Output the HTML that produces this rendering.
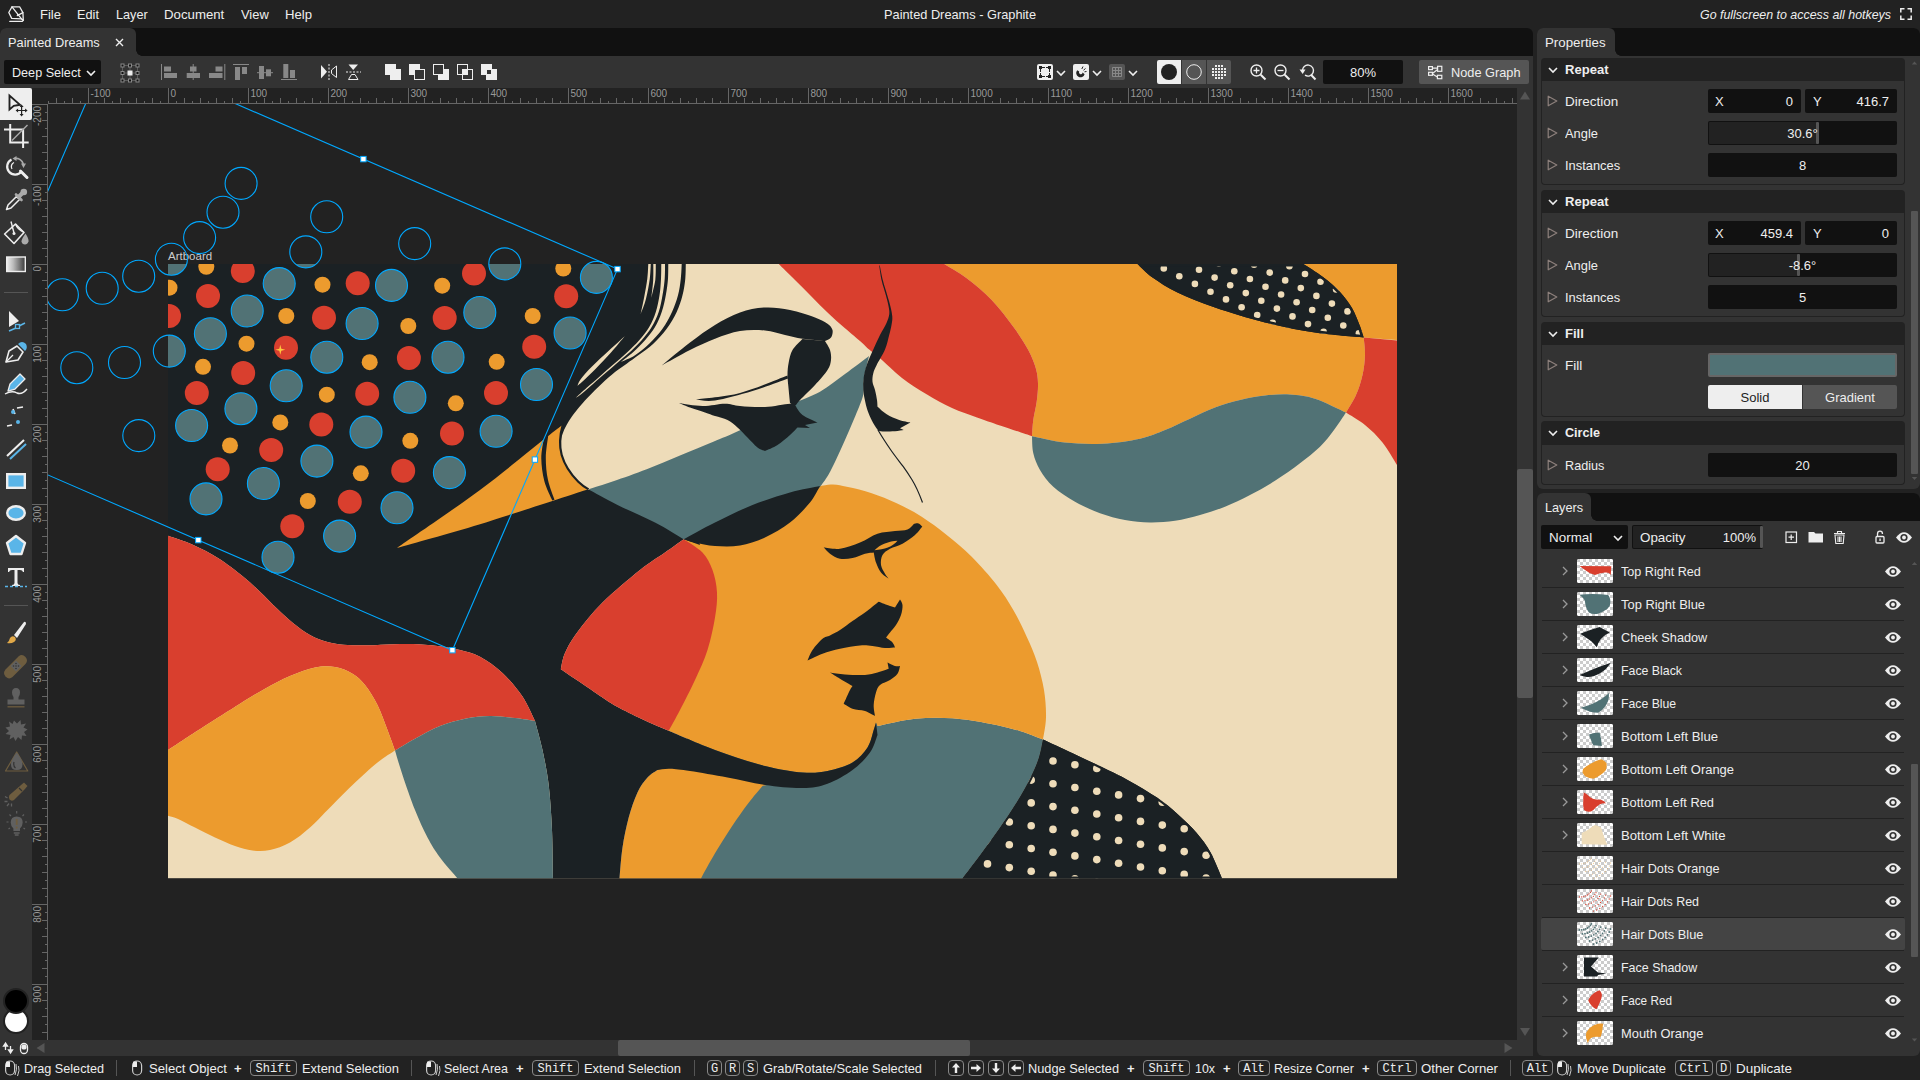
<!DOCTYPE html><html><head><meta charset="utf-8"><title>Painted Dreams - Graphite</title><style>
*{box-sizing:border-box;margin:0;padding:0}
html,body{width:1920px;height:1080px;overflow:hidden;background:#222}
body{font-family:"Liberation Sans",sans-serif;font-size:13.6px;color:#eee;position:relative;line-height:1}
.a{position:absolute}
.t{position:absolute;white-space:nowrap;line-height:16px;height:16px;transform-origin:0 50%;transform:scaleX(.956)}
.tc{transform-origin:50% 50%}
.tr{transform-origin:100% 50%}
.b{font-weight:bold}
.i{font-style:italic}
.k{position:absolute;top:1060px;height:16px;border:1px solid #888;border-radius:4px;font-family:"Liberation Mono",monospace;font-size:12px;line-height:14px;padding-top:1px;text-align:center;color:#eee}
.f{position:absolute;background:#111;border-radius:2px;height:24px}
.sec{position:absolute;left:1541px;width:364px;background:#222;border-radius:4px 4px 0 0;height:24px}
.body{position:absolute;left:1541px;width:364px;border:1px solid #222;border-top:none;border-radius:0 0 4px 4px;background:#333}
.row{position:absolute;left:1542px;width:362px;height:32px;border-bottom:1px solid #222}
.th{position:absolute;left:1577px;width:36px;height:24px;border-radius:2px;overflow:hidden;background:#fff}
svg{display:block;overflow:visible}
</style></head><body><svg width="0" height="0" style="position:absolute"><defs><pattern id="chk" width="6" height="6" patternUnits="userSpaceOnUse"><rect width="6" height="6" fill="#fff"/><rect width="3" height="3" fill="#ccc"/><rect x="3" y="3" width="3" height="3" fill="#ccc"/></pattern></defs></svg><div class="a" style="left:0;top:0;width:1920px;height:28px;background:#222"></div><svg class="a" style="left:0px;top:0px" width="1" height="1" viewBox="0 0 1 1" ><g fill="none" stroke="#eee" stroke-width="1.300" stroke-linejoin="round" stroke-linecap="round"><path d="M12 6.800H19.600L22.900 12.600L23.300 20.300L21.500 18.900L11.700 18.400L8.800 12.500Z"/><path d="M12 6.800L21.500 18.900M22.900 12.600L17.300 15.600M9.800 21.400L22.300 21.300L23.300 20.300"/></g></svg><div class="t " style="left:40px;top:7px;transform:scaleX(0.9586);transform-origin:0 50%;">File</div><div class="t " style="left:77px;top:7px;transform:scaleX(0.9387);transform-origin:0 50%;">Edit</div><div class="t " style="left:116px;top:7px;transform:scaleX(0.9319);transform-origin:0 50%;">Layer</div><div class="t " style="left:164px;top:7px;transform:scaleX(0.9731);transform-origin:0 50%;">Document</div><div class="t " style="left:241px;top:7px;transform:scaleX(0.9480);transform-origin:0 50%;">View</div><div class="t " style="left:285px;top:7px;transform:scaleX(0.9654);transform-origin:0 50%;">Help</div><div class="t " style="left:884px;top:7px;transform:scaleX(0.9401);transform-origin:0 50%;">Painted Dreams - Graphite</div><div class="t i" style="left:1700px;top:7px;transform:scaleX(0.9126);transform-origin:0 50%;">Go fullscreen to access all hotkeys</div><svg class="a" style="left:1900px;top:8px" width="12" height="12" viewBox="0 0 12 12" ><path d="M0.800 4.500V0.800H4.500M7.500 0.800H11.200V4.500M11.200 7.500V11.200H7.500M4.500 11.200H0.800V7.500" fill="none" stroke="#eee" stroke-width="1.500"/></svg><div class="a" style="left:0;top:28px;width:1533px;height:28px;background:#111;border-radius:6px 6px 0 0"></div><div class="a" style="left:0;top:28px;width:136px;height:28px;background:#333;border-radius:6px 6px 0 0"></div><div class="a" style="left:136px;top:50px;width:6px;height:6px;background:radial-gradient(circle at 100% 0,#111 5.5px,#333 6px)"></div><div class="t " style="left:8px;top:35px;transform:scaleX(0.9408);transform-origin:0 50%;">Painted Dreams</div><svg class="a" style="left:115px;top:38px" width="9" height="9" viewBox="0 0 9 9" ><path d="M1 1L8 8M8 1L1 8" stroke="#eee" stroke-width="1.4"/></svg><div class="a" style="left:0;top:56px;width:1533px;height:32px;background:#333"></div><div class="f" style="left:4px;top:60px;width:97px"></div><div class="t " style="left:12px;top:65px;transform:scaleX(0.9276);transform-origin:0 50%;">Deep Select</div><svg class="a" style="left:86px;top:69.5px" width="10" height="6" viewBox="0 0 10 6" ><path d="M1 1L5 5L9 1" fill="none" stroke="#eee" stroke-width="1.6"/></svg><svg class="a" style="left:119.5px;top:62.5px" width="20" height="20" viewBox="0 0 20 20" ><path d="M2.5 2.5H17.5V17.5H2.5ZM10 2.5V17.5M2.5 10H17.5" fill="none" stroke="#888" stroke-width="1" stroke-dasharray="1 1"/><rect x="1.0" y="1.0" width="3" height="3" fill="#111" stroke="#888" stroke-width="1"/><rect x="1.0" y="8.5" width="3" height="3" fill="#111" stroke="#888" stroke-width="1"/><rect x="1.0" y="16.0" width="3" height="3" fill="#111" stroke="#888" stroke-width="1"/><rect x="8.5" y="1.0" width="3" height="3" fill="#111" stroke="#888" stroke-width="1"/><rect x="8.5" y="16.0" width="3" height="3" fill="#111" stroke="#888" stroke-width="1"/><rect x="16.0" y="1.0" width="3" height="3" fill="#111" stroke="#888" stroke-width="1"/><rect x="16.0" y="8.5" width="3" height="3" fill="#111" stroke="#888" stroke-width="1"/><rect x="16.0" y="16.0" width="3" height="3" fill="#111" stroke="#888" stroke-width="1"/><rect x="7.5" y="7.5" width="5" height="5" fill="#eee"/></svg><svg class="a" style="left:0px;top:0px" width="1" height="1" viewBox="0 0 1 1" ><g fill="#888"><rect x="161" y="64" width="1" height="16"/><rect x="164" y="66.5" width="7" height="5"/><rect x="164" y="73" width="13" height="5"/><rect x="192.7" y="64" width="1" height="16"/><rect x="190" y="66.5" width="6.5" height="5"/><rect x="186.7" y="73" width="13.3" height="5"/><rect x="224.3" y="64" width="1" height="16"/><rect x="215.5" y="66.5" width="7" height="5"/><rect x="209" y="73" width="13.5" height="5"/><rect x="233" y="64" width="16" height="1"/><rect x="235" y="67" width="5" height="13"/><rect x="242" y="67" width="5" height="7"/><rect x="257" y="72.2" width="16" height="1"/><rect x="259" y="66" width="5" height="13"/><rect x="266" y="69.3" width="5" height="7"/><rect x="281" y="79" width="16" height="1"/><rect x="283.3" y="64" width="5" height="14"/><rect x="290" y="70" width="5" height="8"/></g></svg><svg class="a" style="left:0px;top:0px" width="1" height="1" viewBox="0 0 1 1" ><path d="M321 65L327 71.7L321 78.5Z" fill="#eee"/><path d="M329 64V80" stroke="#eee" stroke-width="1" stroke-dasharray="2 1.5"/><path d="M336.5 66L331.5 70V73.5L336.5 77.5Z" fill="none" stroke="#eee" stroke-width="1"/></svg><svg class="a" style="left:0px;top:0px" width="1" height="1" viewBox="0 0 1 1" ><path d="M348.5 64.5H358L353.2 70Z" fill="#eee"/><path d="M346 72H361" stroke="#eee" stroke-width="1" stroke-dasharray="2 1.5"/><path d="M351.5 74.5H355L358 79.5H348.5Z" fill="none" stroke="#eee" stroke-width="1"/></svg><svg class="a" style="left:0px;top:0px" width="1" height="1" viewBox="0 0 1 1" ><rect x="385" y="64" width="11" height="11" fill="#eee"/><rect x="390" y="69" width="11" height="11" fill="#eee"/><rect x="409" y="64" width="11" height="11" fill="#eee"/><rect x="414.5" y="69.5" width="10" height="10" fill="#333" stroke="#eee"/><rect x="438" y="69" width="11" height="11" fill="#eee"/><rect x="433.5" y="64.5" width="10" height="10" fill="#333" stroke="#eee"/><rect x="457.5" y="64.5" width="10" height="10" fill="none" stroke="#eee"/><rect x="462.5" y="69.5" width="10" height="10" fill="none" stroke="#eee"/><rect x="462" y="69" width="6" height="6" fill="#eee"/><rect x="481" y="64" width="11" height="11" fill="#eee"/><rect x="486" y="69" width="11" height="11" fill="#eee"/><rect x="487" y="70" width="4" height="4" fill="#333"/></svg><div class="a" style="left:1037px;top:64px;width:16px;height:16px;background:#eee;border-radius:2px"></div><svg class="a" style="left:1037px;top:64px" width="16" height="16" viewBox="0 0 16 16" ><path d="M5 3.5H11M5 12.5H11M3.5 5V11M12.5 5V11" stroke="#222" stroke-width="1" stroke-dasharray="3 1" fill="none"/><g fill="#222"><rect x="2" y="2" width="3" height="3"/><rect x="11" y="2" width="3" height="3"/><rect x="2" y="11" width="3" height="3"/><rect x="11" y="11" width="3" height="3"/></g></svg><svg class="a" style="left:1056px;top:69.5px" width="10" height="6" viewBox="0 0 10 6" ><path d="M1 1L5 5L9 1" fill="none" stroke="#eee" stroke-width="1.6"/></svg><div class="a" style="left:1073px;top:64px;width:16px;height:16px;background:#eee;border-radius:2px"></div><svg class="a" style="left:1073px;top:64px" width="16" height="16" viewBox="0 0 16 16" ><path d="M4.2 6.2A4.3 4.3 0 1 0 11.6 10.2L9.6 8.6A1.8 1.8 0 1 1 6.2 7.6Z" fill="#222"/><path d="M10 2.5L8.8 5M12.5 4.5L10.5 6.2M13.5 7.5L11.5 7.8" stroke="#222" stroke-width="1"/></svg><svg class="a" style="left:1092px;top:69.5px" width="10" height="6" viewBox="0 0 10 6" ><path d="M1 1L5 5L9 1" fill="none" stroke="#eee" stroke-width="1.6"/></svg><div class="a" style="left:1109px;top:64px;width:16px;height:16px;background:#555;border-radius:2px"></div><svg class="a" style="left:1109px;top:64px" width="16" height="16" viewBox="0 0 16 16" ><path d="M3.5 3.5H12.5V12.5H3.5ZM6.5 3.5V12.5M9.5 3.5V12.5M3.5 6.5H12.5M3.5 9.5H12.5" stroke="#888" stroke-width="1" fill="none"/></svg><svg class="a" style="left:1128px;top:69.5px" width="10" height="6" viewBox="0 0 10 6" ><path d="M1 1L5 5L9 1" fill="none" stroke="#eee" stroke-width="1.6"/></svg><div class="a" style="left:1157px;top:60px;width:24px;height:24px;background:#eee;border-radius:2px 0 0 2px"></div><div class="a" style="left:1182px;top:60px;width:24px;height:24px;background:#555"></div><div class="a" style="left:1207px;top:60px;width:24px;height:24px;background:#555;border-radius:0 2px 2px 0"></div><svg class="a" style="left:0px;top:0px" width="1" height="1" viewBox="0 0 1 1" ><circle cx="1169" cy="72" r="8" fill="#222"/><circle cx="1194" cy="72" r="7.3" fill="none" stroke="#eee" stroke-width="1"/><g fill="#eee"><rect x="1212" y="68" width="2" height="2"/><rect x="1212" y="71" width="2" height="2"/><rect x="1212" y="74" width="2" height="2"/><rect x="1215" y="65" width="2" height="2"/><rect x="1215" y="68" width="2" height="2"/><rect x="1215" y="71" width="2" height="2"/><rect x="1215" y="74" width="2" height="2"/><rect x="1215" y="77" width="2" height="2"/><rect x="1218" y="65" width="2" height="2"/><rect x="1218" y="68" width="2" height="2"/><rect x="1218" y="71" width="2" height="2"/><rect x="1218" y="74" width="2" height="2"/><rect x="1218" y="77" width="2" height="2"/><rect x="1221" y="65" width="2" height="2"/><rect x="1221" y="68" width="2" height="2"/><rect x="1221" y="71" width="2" height="2"/><rect x="1221" y="74" width="2" height="2"/><rect x="1221" y="77" width="2" height="2"/><rect x="1224" y="68" width="2" height="2"/><rect x="1224" y="71" width="2" height="2"/><rect x="1224" y="74" width="2" height="2"/></g></svg><svg class="a" style="left:0px;top:0px" width="1" height="1" viewBox="0 0 1 1" ><circle cx="1256.5" cy="70.5" r="5.5" fill="none" stroke="#eee" stroke-width="1.4"/><path d="M1260.7 74.7L1265.5 79.5" stroke="#eee" stroke-width="2"/><path d="M1253.5 70.5H1259.5M1256.5 67.5V73.5" stroke="#eee" stroke-width="1.3"/><circle cx="1280.5" cy="70.5" r="5.5" fill="none" stroke="#eee" stroke-width="1.4"/><path d="M1284.7 74.7L1289.5 79.5" stroke="#eee" stroke-width="2"/><path d="M1277.5 70.5H1283.5" stroke="#eee" stroke-width="1.3"/><path d="M1302.5 71A5.5 5.5 0 1 1 1305 75.2" fill="none" stroke="#eee" stroke-width="1.4"/><path d="M1311 74.7L1315.5 79.5" stroke="#eee" stroke-width="2"/><path d="M1299.5 69.5L1302.7 74L1305.5 69.5Z" fill="#eee"/></svg><div class="f" style="left:1323px;top:60px;width:80px"></div><div class="t tc" style="left:1323px;width:80px;text-align:center;top:65px">80%</div><div class="a" style="left:1419px;top:60px;width:110px;height:24px;background:#555;border-radius:2px"></div><svg class="a" style="left:0px;top:0px" width="1" height="1" viewBox="0 0 1 1" ><g fill="none" stroke="#eee" stroke-width="1.200"><rect x="1428.600" y="66.600" width="3.800" height="3"/><rect x="1428.600" y="72.300" width="3.800" height="3"/><rect x="1437.600" y="66.300" width="4.200" height="5"/><rect x="1437.400" y="75.300" width="4.400" height="3.400"/><path d="M1432.400 68.100H1437.600M1432.400 73.500L1437.600 69.500M1432.400 74L1437.400 77"/></g></svg><div class="t " style="left:1451px;top:65px;transform:scaleX(0.9384);transform-origin:0 50%;">Node Graph</div><div class="a" style="left:32px;top:88px;width:1485px;height:16px;background:#222"></div><div class="a" style="left:32px;top:104px;width:16px;height:936px;background:#222"></div><svg class="a" style="left:0px;top:0px" width="1" height="1" viewBox="0 0 1 1" ><path d="M48.5 101V103M56.5 98V103M64.5 101V103M72.5 98V103M80.5 101V103M88.5 88V103M96.5 101V103M104.5 98V103M112.5 101V103M120.5 98V103M128.5 101V103M136.5 98V103M144.5 101V103M152.5 98V103M160.5 101V103M168.5 88V103M176.5 101V103M184.5 98V103M192.5 101V103M200.5 98V103M208.5 101V103M216.5 98V103M224.5 101V103M232.5 98V103M240.5 101V103M248.5 88V103M256.5 101V103M264.5 98V103M272.5 101V103M280.5 98V103M288.5 101V103M296.5 98V103M304.5 101V103M312.5 98V103M320.5 101V103M328.5 88V103M336.5 101V103M344.5 98V103M352.5 101V103M360.5 98V103M368.5 101V103M376.5 98V103M384.5 101V103M392.5 98V103M400.5 101V103M408.5 88V103M416.5 101V103M424.5 98V103M432.5 101V103M440.5 98V103M448.5 101V103M456.5 98V103M464.5 101V103M472.5 98V103M480.5 101V103M488.5 88V103M496.5 101V103M504.5 98V103M512.5 101V103M520.5 98V103M528.5 101V103M536.5 98V103M544.5 101V103M552.5 98V103M560.5 101V103M568.5 88V103M576.5 101V103M584.5 98V103M592.5 101V103M600.5 98V103M608.5 101V103M616.5 98V103M624.5 101V103M632.5 98V103M640.5 101V103M648.5 88V103M656.5 101V103M664.5 98V103M672.5 101V103M680.5 98V103M688.5 101V103M696.5 98V103M704.5 101V103M712.5 98V103M720.5 101V103M728.5 88V103M736.5 101V103M744.5 98V103M752.5 101V103M760.5 98V103M768.5 101V103M776.5 98V103M784.5 101V103M792.5 98V103M800.5 101V103M808.5 88V103M816.5 101V103M824.5 98V103M832.5 101V103M840.5 98V103M848.5 101V103M856.5 98V103M864.5 101V103M872.5 98V103M880.5 101V103M888.5 88V103M896.5 101V103M904.5 98V103M912.5 101V103M920.5 98V103M928.5 101V103M936.5 98V103M944.5 101V103M952.5 98V103M960.5 101V103M968.5 88V103M976.5 101V103M984.5 98V103M992.5 101V103M1000.5 98V103M1008.5 101V103M1016.5 98V103M1024.5 101V103M1032.5 98V103M1040.5 101V103M1048.5 88V103M1056.5 101V103M1064.5 98V103M1072.5 101V103M1080.5 98V103M1088.5 101V103M1096.5 98V103M1104.5 101V103M1112.5 98V103M1120.5 101V103M1128.5 88V103M1136.5 101V103M1144.5 98V103M1152.5 101V103M1160.5 98V103M1168.5 101V103M1176.5 98V103M1184.5 101V103M1192.5 98V103M1200.5 101V103M1208.5 88V103M1216.5 101V103M1224.5 98V103M1232.5 101V103M1240.5 98V103M1248.5 101V103M1256.5 98V103M1264.5 101V103M1272.5 98V103M1280.5 101V103M1288.5 88V103M1296.5 101V103M1304.5 98V103M1312.5 101V103M1320.5 98V103M1328.5 101V103M1336.5 98V103M1344.5 101V103M1352.5 98V103M1360.5 101V103M1368.5 88V103M1376.5 101V103M1384.5 98V103M1392.5 101V103M1400.5 98V103M1408.5 101V103M1416.5 98V103M1424.5 101V103M1432.5 98V103M1440.5 101V103M1448.5 88V103M1456.5 101V103M1464.5 98V103M1472.5 101V103M1480.5 98V103M1488.5 101V103M1496.5 98V103M1504.5 101V103M1512.5 98V103M32 104.5H47M45 112.5H47M42 120.5H47M45 128.5H47M42 136.5H47M45 144.5H47M42 152.5H47M45 160.5H47M42 168.5H47M45 176.5H47M32 184.5H47M45 192.5H47M42 200.5H47M45 208.5H47M42 216.5H47M45 224.5H47M42 232.5H47M45 240.5H47M42 248.5H47M45 256.5H47M32 264.5H47M45 272.5H47M42 280.5H47M45 288.5H47M42 296.5H47M45 304.5H47M42 312.5H47M45 320.5H47M42 328.5H47M45 336.5H47M32 344.5H47M45 352.5H47M42 360.5H47M45 368.5H47M42 376.5H47M45 384.5H47M42 392.5H47M45 400.5H47M42 408.5H47M45 416.5H47M32 424.5H47M45 432.5H47M42 440.5H47M45 448.5H47M42 456.5H47M45 464.5H47M42 472.5H47M45 480.5H47M42 488.5H47M45 496.5H47M32 504.5H47M45 512.5H47M42 520.5H47M45 528.5H47M42 536.5H47M45 544.5H47M42 552.5H47M45 560.5H47M42 568.5H47M45 576.5H47M32 584.5H47M45 592.5H47M42 600.5H47M45 608.5H47M42 616.5H47M45 624.5H47M42 632.5H47M45 640.5H47M42 648.5H47M45 656.5H47M32 664.5H47M45 672.5H47M42 680.5H47M45 688.5H47M42 696.5H47M45 704.5H47M42 712.5H47M45 720.5H47M42 728.5H47M45 736.5H47M32 744.5H47M45 752.5H47M42 760.5H47M45 768.5H47M42 776.5H47M45 784.5H47M42 792.5H47M45 800.5H47M42 808.5H47M45 816.5H47M32 824.5H47M45 832.5H47M42 840.5H47M45 848.5H47M42 856.5H47M45 864.5H47M42 872.5H47M45 880.5H47M42 888.5H47M45 896.5H47M32 904.5H47M45 912.5H47M42 920.5H47M45 928.5H47M42 936.5H47M45 944.5H47M42 952.5H47M45 960.5H47M42 968.5H47M45 976.5H47M32 984.5H47M45 992.5H47M42 1000.5H47M45 1008.5H47M42 1016.5H47M45 1024.5H47M42 1032.5H47M48 103.5H1517M47.5 104V1040" stroke="#666" stroke-width="1" fill="none"/><g fill="#999" font-size="10" style="font-family:'Liberation Sans',sans-serif"><text x="90.5" y="97">-100</text><text x="170.5" y="97">0</text><text x="250.5" y="97">100</text><text x="330.5" y="97">200</text><text x="410.5" y="97">300</text><text x="490.5" y="97">400</text><text x="570.5" y="97">500</text><text x="650.5" y="97">600</text><text x="730.5" y="97">700</text><text x="810.5" y="97">800</text><text x="890.5" y="97">900</text><text x="970.5" y="97">1000</text><text x="1050.5" y="97">1100</text><text x="1130.5" y="97">1200</text><text x="1210.5" y="97">1300</text><text x="1290.5" y="97">1400</text><text x="1370.5" y="97">1500</text><text x="1450.5" y="97">1600</text><text transform="translate(41 106) rotate(-90)" text-anchor="end">-200</text><text transform="translate(41 186) rotate(-90)" text-anchor="end">-100</text><text transform="translate(41 266) rotate(-90)" text-anchor="end">0</text><text transform="translate(41 346) rotate(-90)" text-anchor="end">100</text><text transform="translate(41 426) rotate(-90)" text-anchor="end">200</text><text transform="translate(41 506) rotate(-90)" text-anchor="end">300</text><text transform="translate(41 586) rotate(-90)" text-anchor="end">400</text><text transform="translate(41 666) rotate(-90)" text-anchor="end">500</text><text transform="translate(41 746) rotate(-90)" text-anchor="end">600</text><text transform="translate(41 826) rotate(-90)" text-anchor="end">700</text><text transform="translate(41 906) rotate(-90)" text-anchor="end">800</text><text transform="translate(41 986) rotate(-90)" text-anchor="end">900</text></g></svg><svg id="cv" width="1469" height="936" viewBox="48 104 1469 936" style="position:absolute;left:48px;top:104px;overflow:hidden">
<rect x="48" y="104" width="1469" height="936" fill="#222"/>
<text x="168" y="260" font-size="11.5" fill="#ccc" style="font-family:'Liberation Sans',sans-serif">Artboard</text>
<clipPath id="ab"><rect x="168" y="264" width="1229" height="614.4"/></clipPath>
<g clip-path="url(#ab)"><rect x="168" y="264" width="1229" height="614.4" fill="#eedcb9"/>
<path d="M944.2 264L1397 264L1397 340L1363.7 337.5C1363.9 340.4 1365.2 348.8 1365 355C1364.8 361.2 1364 368.3 1362.5 375C1361 381.7 1358.8 388.8 1356 395C1353.2 401.2 1347.7 409.6 1346 412.5C1340.8 410.2 1324.3 401.7 1315 398.7C1305.7 395.7 1298.3 395 1290 394.5C1281.7 394 1273.3 394.6 1265 395.5C1256.7 396.4 1248.3 398 1240 400C1231.7 402 1223.3 404.4 1215 407.5C1206.7 410.6 1198.3 414.9 1190 418.7C1181.7 422.4 1173.3 426.7 1165 430C1156.7 433.3 1150.4 436.4 1140 438.7C1129.6 441 1115 443.1 1102.5 443.7C1090 444.3 1076.8 443.8 1065 442.5C1053.2 441.2 1037.5 437.2 1032 436.2C1032.2 433.5 1032.5 425.8 1033.3 420C1034.1 414.2 1035.9 407.8 1036.7 401.7C1037.5 395.6 1038.2 388.9 1038 383.3C1037.8 377.7 1037.4 373.9 1035.8 368.3C1034.2 362.8 1032 356.9 1028.3 350C1024.5 343.1 1019.4 335 1013.3 326.7C1007.2 318.4 999.5 308.1 991.7 300C983.9 291.9 974.6 284.3 966.7 278.3C958.8 272.3 948 266.4 944.2 264Z" fill="#ec9b2e"/>
<path d="M1363.7 337.5L1397 340.5L1397 465C1394.6 461.2 1387.8 449.2 1382.5 442.5C1377.2 435.8 1371.1 430 1365 425C1358.9 420 1349.2 414.6 1346 412.5C1347.7 409.6 1353.2 401.2 1356 395C1358.8 388.8 1361 381.7 1362.5 375C1364 368.3 1364.8 361.2 1365 355C1365.2 348.8 1363.9 340.4 1363.7 337.5Z" fill="#d93f2e"/>
<path d="M1032 436.2C1032.2 439.1 1032 447.7 1033.3 453.3C1034.6 458.9 1036.7 464.4 1040 470C1043.3 475.6 1047.5 481.4 1053.3 486.7C1059.1 492 1067.2 497.3 1075 501.7C1082.8 506.1 1091.7 510.2 1100 513.3C1108.3 516.3 1116.7 518.5 1125 520C1133.3 521.5 1141.7 522.4 1150 522.5C1158.3 522.6 1166.7 522 1175 520.8C1183.3 519.5 1191.7 517.4 1200 515C1208.3 512.6 1216.7 510 1225 506.7C1233.3 503.4 1241.7 499.3 1250 495C1258.3 490.7 1266.7 486.1 1275 480.8C1283.3 475.5 1292.5 469 1300 463.3C1307.5 457.6 1314.3 452.2 1320 446.7C1325.7 441.1 1329.7 435.7 1334 430C1338.3 424.3 1344 415.4 1346 412.5C1340.8 410.2 1324.3 401.7 1315 398.7C1305.7 395.7 1298.3 395 1290 394.5C1281.7 394 1273.3 394.6 1265 395.5C1256.7 396.4 1248.3 398 1240 400C1231.7 402 1223.3 404.4 1215 407.5C1206.7 410.6 1198.3 414.9 1190 418.7C1181.7 422.4 1173.3 426.7 1165 430C1156.7 433.3 1150.4 436.4 1140 438.7C1129.6 441 1115 443.1 1102.5 443.7C1090 444.3 1076.8 443.8 1065 442.5C1053.2 441.2 1037.5 437.2 1032 436.2Z" fill="#517275"/>
<path d="M778.8 264L944.2 264C948 266.4 958.8 272.3 966.7 278.3C974.6 284.3 983.9 291.9 991.7 300C999.5 308.1 1007.2 318.4 1013.3 326.7C1019.4 335 1024.5 343.1 1028.3 350C1032 356.9 1034.2 362.8 1035.8 368.3C1037.4 373.9 1037.8 377.7 1038 383.3C1038.2 388.9 1037.5 395.6 1036.7 401.7C1035.9 407.8 1034.1 414.2 1033.3 420C1032.5 425.8 1032.2 433.5 1032 436.2C1026.7 434.4 1009.2 428.6 1000 425.5C990.8 422.4 985 420.4 977 417.5C969 414.6 960.3 411.8 952 408C943.7 404.2 935.3 399.5 927 394.5C918.7 389.5 909.8 384 902 378C894.2 372 885.5 363 880 358.3C874.5 353.6 872.2 352.2 869.2 349.6C866.2 347 865.7 346.1 861.7 342.5C857.7 338.9 850.6 333.2 845 328.3C839.4 323.4 833.8 318.6 828.3 313.3C822.8 308 817.2 302.2 811.7 296.7C806.2 291.1 800.5 285.4 795 280C789.5 274.6 781.5 266.7 778.8 264Z" fill="#d93f2e"/>
<clipPath id="ctr"><path d="M1137.5 264C1140 266.2 1145.8 272.8 1152.5 277.5C1159.2 282.2 1167.1 287.5 1177.5 292.5C1187.9 297.5 1200.4 302.5 1215 307.5C1229.6 312.5 1248.3 318.3 1265 322.5C1281.7 326.7 1298.5 330 1315 332.5C1331.5 335 1355.6 336.7 1363.7 337.5C1363 335.4 1361.5 329.9 1359.5 325C1357.5 320.1 1355.2 313.5 1352 308C1348.8 302.5 1344.8 297.2 1340 292C1335.2 286.8 1329.1 281.7 1323 277C1316.9 272.3 1306.7 266.2 1303.4 264Z"/></clipPath>
<path d="M1137.5 264C1140 266.2 1145.8 272.8 1152.5 277.5C1159.2 282.2 1167.1 287.5 1177.5 292.5C1187.9 297.5 1200.4 302.5 1215 307.5C1229.6 312.5 1248.3 318.3 1265 322.5C1281.7 326.7 1298.5 330 1315 332.5C1331.5 335 1355.6 336.7 1363.7 337.5C1363 335.4 1361.5 329.9 1359.5 325C1357.5 320.1 1355.2 313.5 1352 308C1348.8 302.5 1344.8 297.2 1340 292C1335.2 286.8 1329.1 281.7 1323 277C1316.9 272.3 1306.7 266.2 1303.4 264Z" fill="#1b2124"/>
<g clip-path="url(#ctr)" fill="#eedcb9"><circle cx="1203.2" cy="255.7" r="3.3"/><circle cx="1238.5" cy="257.1" r="3.3"/><circle cx="1273.8" cy="258.5" r="3.3"/><circle cx="1309.1" cy="259.9" r="3.3"/><circle cx="1344.4" cy="261.3" r="3.3"/><circle cx="1148.2" cy="260.6" r="3.3"/><circle cx="1183.5" cy="262" r="3.3"/><circle cx="1218.8" cy="263.4" r="3.3"/><circle cx="1254.1" cy="264.8" r="3.3"/><circle cx="1289.4" cy="266.2" r="3.3"/><circle cx="1324.7" cy="267.6" r="3.3"/><circle cx="1360" cy="269" r="3.3"/><circle cx="1163.8" cy="268.4" r="3.3"/><circle cx="1199" cy="269.8" r="3.3"/><circle cx="1234.3" cy="271.2" r="3.3"/><circle cx="1269.7" cy="272.6" r="3.3"/><circle cx="1305" cy="274" r="3.3"/><circle cx="1340.2" cy="275.4" r="3.3"/><circle cx="1179.3" cy="276.2" r="3.3"/><circle cx="1214.6" cy="277.6" r="3.3"/><circle cx="1249.9" cy="279" r="3.3"/><circle cx="1285.2" cy="280.4" r="3.3"/><circle cx="1320.5" cy="281.8" r="3.3"/><circle cx="1355.8" cy="283.2" r="3.3"/><circle cx="1194.9" cy="283.9" r="3.3"/><circle cx="1230.2" cy="285.3" r="3.3"/><circle cx="1265.5" cy="286.7" r="3.3"/><circle cx="1300.8" cy="288.1" r="3.3"/><circle cx="1336.1" cy="289.5" r="3.3"/><circle cx="1371.4" cy="290.9" r="3.3"/><circle cx="1210.5" cy="291.7" r="3.3"/><circle cx="1245.8" cy="293.1" r="3.3"/><circle cx="1281.1" cy="294.5" r="3.3"/><circle cx="1316.4" cy="295.9" r="3.3"/><circle cx="1351.7" cy="297.3" r="3.3"/><circle cx="1226" cy="299.4" r="3.3"/><circle cx="1261.3" cy="300.8" r="3.3"/><circle cx="1296.6" cy="302.2" r="3.3"/><circle cx="1331.9" cy="303.6" r="3.3"/><circle cx="1367.2" cy="305" r="3.3"/><circle cx="1241.6" cy="307.2" r="3.3"/><circle cx="1276.9" cy="308.6" r="3.3"/><circle cx="1312.2" cy="310" r="3.3"/><circle cx="1347.5" cy="311.4" r="3.3"/><circle cx="1257.2" cy="315" r="3.3"/><circle cx="1292.5" cy="316.4" r="3.3"/><circle cx="1327.8" cy="317.8" r="3.3"/><circle cx="1363.1" cy="319.2" r="3.3"/><circle cx="1272.7" cy="322.7" r="3.3"/><circle cx="1308" cy="324.1" r="3.3"/><circle cx="1343.3" cy="325.5" r="3.3"/><circle cx="1288.3" cy="330.5" r="3.3"/><circle cx="1323.6" cy="331.9" r="3.3"/><circle cx="1358.9" cy="333.3" r="3.3"/><circle cx="1303.9" cy="338.2" r="3.3"/><circle cx="1339.2" cy="339.6" r="3.3"/><circle cx="1374.5" cy="341" r="3.3"/><path d="M1137.5 264C1140 266.2 1145.8 272.8 1152.5 277.5C1159.2 282.2 1167.1 287.5 1177.5 292.5C1187.9 297.5 1200.4 302.5 1215 307.5C1229.6 312.5 1248.3 318.3 1265 322.5C1281.7 326.7 1298.5 330 1315 332.5C1331.5 335 1355.6 336.7 1363.7 337.5C1363 335.4 1361.5 329.9 1359.5 325C1357.5 320.1 1355.2 313.5 1352 308C1348.8 302.5 1344.8 297.2 1340 292C1335.2 286.8 1329.1 281.7 1323 277C1316.9 272.3 1306.7 266.2 1303.4 264Z" fill="none" stroke="#1b2124" stroke-width="5"/></g>
<path d="M700 878.4C700 848.7 670.4 729.7 700 700C729.6 670.3 847.9 700 877.5 700L877.5 726C883.8 724.8 902.5 720 915 718.7C927.5 717.4 940 717.4 952.5 718.2C965 719 978.8 721.6 990 723.7C1001.2 725.8 1011.2 728.4 1020 731C1028.8 733.6 1039.2 738.1 1043 739.5C1042.3 742.6 1040.9 751.6 1038.8 758C1036.7 764.4 1034.2 770.4 1030.4 777.9C1026.7 785.4 1021.5 794.6 1016.3 803C1011.1 811.4 1005.3 820 999.4 828.5C993.5 837 987.1 845.6 981 853.9C974.9 862.2 965.6 874.3 962.5 878.4L700 878.4Z" fill="#517275"/>
<clipPath id="cbr"><path d="M1043 739.5C1047.9 741.8 1063 748.7 1072.6 753.2C1082.2 757.7 1091.4 762 1100.8 766.6C1110.2 771.2 1119.5 775.5 1128.9 780.7C1138.3 785.9 1148.8 792 1157 797.6C1165.2 803.2 1171.4 808.6 1178 814.5C1184.6 820.4 1191.1 826.5 1196.5 832.8C1201.9 839.1 1206.3 844.9 1210.6 852.5C1214.8 860.1 1220.1 874.1 1222 878.4L962.5 878.4C965.6 874.3 974.9 862.2 981 853.9C987.1 845.6 993.5 837 999.4 828.5C1005.3 820 1011.1 811.4 1016.3 803C1021.5 794.6 1026.7 785.4 1030.4 777.9C1034.2 770.4 1036.7 764.4 1038.8 758C1040.9 751.6 1042.3 742.6 1043 739.5Z"/></clipPath>
<path d="M1043 739.5C1047.9 741.8 1063 748.7 1072.6 753.2C1082.2 757.7 1091.4 762 1100.8 766.6C1110.2 771.2 1119.5 775.5 1128.9 780.7C1138.3 785.9 1148.8 792 1157 797.6C1165.2 803.2 1171.4 808.6 1178 814.5C1184.6 820.4 1191.1 826.5 1196.5 832.8C1201.9 839.1 1206.3 844.9 1210.6 852.5C1214.8 860.1 1220.1 874.1 1222 878.4L962.5 878.4C965.6 874.3 974.9 862.2 981 853.9C987.1 845.6 993.5 837 999.4 828.5C1005.3 820 1011.1 811.4 1016.3 803C1021.5 794.6 1026.7 785.4 1030.4 777.9C1034.2 770.4 1036.7 764.4 1038.8 758C1040.9 751.6 1042.3 742.6 1043 739.5Z" fill="#1b2124"/>
<g clip-path="url(#cbr)" fill="#eedcb9"><circle cx="965.6" cy="746.2" r="3.8"/><circle cx="965.6" cy="769" r="3.8"/><circle cx="965.6" cy="791.8" r="3.8"/><circle cx="965.6" cy="814.6" r="3.8"/><circle cx="965.6" cy="837.4" r="3.8"/><circle cx="965.6" cy="860.2" r="3.8"/><circle cx="965.6" cy="883" r="3.8"/><circle cx="987.5" cy="749.9" r="3.8"/><circle cx="987.5" cy="772.7" r="3.8"/><circle cx="987.5" cy="795.5" r="3.8"/><circle cx="987.5" cy="818.3" r="3.8"/><circle cx="987.5" cy="841.1" r="3.8"/><circle cx="987.5" cy="863.9" r="3.8"/><circle cx="987.5" cy="886.7" r="3.8"/><circle cx="1009.3" cy="730.8" r="3.8"/><circle cx="1009.3" cy="753.6" r="3.8"/><circle cx="1009.3" cy="776.4" r="3.8"/><circle cx="1009.3" cy="799.2" r="3.8"/><circle cx="1009.3" cy="822" r="3.8"/><circle cx="1009.3" cy="844.8" r="3.8"/><circle cx="1009.3" cy="867.6" r="3.8"/><circle cx="1031.2" cy="734.5" r="3.8"/><circle cx="1031.2" cy="757.3" r="3.8"/><circle cx="1031.2" cy="780.1" r="3.8"/><circle cx="1031.2" cy="802.9" r="3.8"/><circle cx="1031.2" cy="825.7" r="3.8"/><circle cx="1031.2" cy="848.5" r="3.8"/><circle cx="1031.2" cy="871.3" r="3.8"/><circle cx="1053" cy="738.2" r="3.8"/><circle cx="1053" cy="761" r="3.8"/><circle cx="1053" cy="783.8" r="3.8"/><circle cx="1053" cy="806.6" r="3.8"/><circle cx="1053" cy="829.4" r="3.8"/><circle cx="1053" cy="852.2" r="3.8"/><circle cx="1053" cy="875" r="3.8"/><circle cx="1074.9" cy="741.9" r="3.8"/><circle cx="1074.9" cy="764.7" r="3.8"/><circle cx="1074.9" cy="787.5" r="3.8"/><circle cx="1074.9" cy="810.3" r="3.8"/><circle cx="1074.9" cy="833.1" r="3.8"/><circle cx="1074.9" cy="855.9" r="3.8"/><circle cx="1074.9" cy="878.7" r="3.8"/><circle cx="1096.8" cy="745.6" r="3.8"/><circle cx="1096.8" cy="768.4" r="3.8"/><circle cx="1096.8" cy="791.2" r="3.8"/><circle cx="1096.8" cy="814" r="3.8"/><circle cx="1096.8" cy="836.8" r="3.8"/><circle cx="1096.8" cy="859.6" r="3.8"/><circle cx="1096.8" cy="882.4" r="3.8"/><circle cx="1118.6" cy="749.3" r="3.8"/><circle cx="1118.6" cy="772.1" r="3.8"/><circle cx="1118.6" cy="794.9" r="3.8"/><circle cx="1118.6" cy="817.7" r="3.8"/><circle cx="1118.6" cy="840.5" r="3.8"/><circle cx="1118.6" cy="863.3" r="3.8"/><circle cx="1118.6" cy="886.1" r="3.8"/><circle cx="1140.5" cy="730.2" r="3.8"/><circle cx="1140.5" cy="753" r="3.8"/><circle cx="1140.5" cy="775.8" r="3.8"/><circle cx="1140.5" cy="798.6" r="3.8"/><circle cx="1140.5" cy="821.4" r="3.8"/><circle cx="1140.5" cy="844.2" r="3.8"/><circle cx="1140.5" cy="867" r="3.8"/><circle cx="1140.5" cy="889.8" r="3.8"/><circle cx="1162.3" cy="733.9" r="3.8"/><circle cx="1162.3" cy="756.7" r="3.8"/><circle cx="1162.3" cy="779.5" r="3.8"/><circle cx="1162.3" cy="802.3" r="3.8"/><circle cx="1162.3" cy="825.1" r="3.8"/><circle cx="1162.3" cy="847.9" r="3.8"/><circle cx="1162.3" cy="870.7" r="3.8"/><circle cx="1184.2" cy="737.6" r="3.8"/><circle cx="1184.2" cy="760.4" r="3.8"/><circle cx="1184.2" cy="783.2" r="3.8"/><circle cx="1184.2" cy="806" r="3.8"/><circle cx="1184.2" cy="828.8" r="3.8"/><circle cx="1184.2" cy="851.6" r="3.8"/><circle cx="1184.2" cy="874.4" r="3.8"/><circle cx="1206.1" cy="741.3" r="3.8"/><circle cx="1206.1" cy="764.1" r="3.8"/><circle cx="1206.1" cy="786.9" r="3.8"/><circle cx="1206.1" cy="809.7" r="3.8"/><circle cx="1206.1" cy="832.5" r="3.8"/><circle cx="1206.1" cy="855.3" r="3.8"/><circle cx="1206.1" cy="878.1" r="3.8"/><circle cx="1227.9" cy="745" r="3.8"/><circle cx="1227.9" cy="767.8" r="3.8"/><circle cx="1227.9" cy="790.6" r="3.8"/><circle cx="1227.9" cy="813.4" r="3.8"/><circle cx="1227.9" cy="836.2" r="3.8"/><circle cx="1227.9" cy="859" r="3.8"/><circle cx="1227.9" cy="881.8" r="3.8"/><path d="M1043 739.5C1047.9 741.8 1063 748.7 1072.6 753.2C1082.2 757.7 1091.4 762 1100.8 766.6C1110.2 771.2 1119.5 775.5 1128.9 780.7C1138.3 785.9 1148.8 792 1157 797.6C1165.2 803.2 1171.4 808.6 1178 814.5C1184.6 820.4 1191.1 826.5 1196.5 832.8C1201.9 839.1 1206.3 844.9 1210.6 852.5C1214.8 860.1 1220.1 874.1 1222 878.4L962.5 878.4C965.6 874.3 974.9 862.2 981 853.9C987.1 845.6 993.5 837 999.4 828.5C1005.3 820 1011.1 811.4 1016.3 803C1021.5 794.6 1026.7 785.4 1030.4 777.9C1034.2 770.4 1036.7 764.4 1038.8 758C1040.9 751.6 1042.3 742.6 1043 739.5Z" fill="none" stroke="#1b2124" stroke-width="4"/></g>
<path d="M683.7 539.2C696.4 533.5 737 513.9 760 505C783 496.1 807.2 488.9 821.7 485.8C836.2 482.8 838.4 485.4 846.7 486.7C855 487.9 863.4 490.5 871.7 493.3C880 496.1 888.4 499.4 896.7 503.3C905 507.2 913.4 511.4 921.7 516.7C930 522 938.4 528.3 946.7 535C955 541.7 963.4 548.4 971.7 556.7C980 565 989.8 576.1 996.7 585C1003.6 593.9 1008.3 601.4 1013.3 610C1018.3 618.6 1022.8 628 1026.7 636.7C1030.7 645.4 1034.1 653.1 1037 662C1039.9 670.9 1042.5 680.8 1044 690C1045.5 699.2 1046.2 709.2 1046 717.5C1045.8 725.8 1043.5 735.8 1043 739.5C1039.2 738.1 1028.8 733.6 1020 731C1011.2 728.4 1001.2 725.8 990 723.7C978.8 721.6 965 719 952.5 718.2C940 717.4 927.5 717.4 915 718.7C902.5 720 883.8 724.8 877.5 726L876 722.5C875.6 723.8 875.1 725.8 873.7 730C872.3 734.2 871 742.1 867.5 747.5C864 752.9 859.2 758.6 852.5 762.5C845.8 766.4 835.8 769.3 827.5 771C819.2 772.7 812.9 773.3 802.5 772.5C792.1 771.7 779.6 769.8 765 766C750.4 762.2 731 755.9 715 750C699 744.1 676.4 734 668.7 730.8L683.7 539.2Z" fill="#ec9b2e"/>
<path d="M657.5 770C655.8 771.2 650.8 773.8 647.5 777.5C644.2 781.2 640.6 785.8 637.5 792.5C634.4 799.2 631.2 808.3 628.7 817.5C626.2 826.7 624 837.4 622.5 847.5C621 857.6 620 873.2 619.5 878.4L701 878.4C703.3 874.2 709.9 861.9 715 853.3C720.1 844.7 726.2 835 731.7 826.7C737.2 818.4 743.2 810.1 748.3 803.3C753.4 796.5 760.1 788.9 762.5 786C762.9 785 782.5 783.5 765 780C747.5 776.5 675.4 767.5 657.5 765Z" fill="#ec9b2e"/>
<path d="M168 264L685.8 264C685.7 266.4 685.8 273.5 685.3 278.7C684.8 283.9 683.9 289.8 682.5 295.3C681.1 300.9 679.3 306.4 676.7 312C674.1 317.6 670.6 323.4 666.7 328.7C662.8 334 658 339.3 653.3 343.7C648.6 348.1 642.7 352 638.3 355.3C633.9 358.6 630.6 360.9 626.7 363.7C622.8 366.5 619.2 368.7 615 372C610.8 375.3 606.2 379.5 601.7 383.7C597.2 387.9 592.5 392.6 588.3 397C584.1 401.4 580 406.1 576.7 410.3C573.4 414.5 570.5 418.4 568.3 422C566.1 425.6 564.5 428.8 563.3 432C562.1 435.2 561.3 436.8 561.2 441C561.1 445.2 560.6 451.8 562.5 457.5C564.4 463.2 568.3 469.6 572.5 475C576.7 480.4 585 487.5 587.5 490C591.6 490.3 601.2 489 612 492C622.8 495 638.7 502.2 652 508C665.3 513.8 684 520.8 692 527C700 533.2 698.7 542 700 545L683.7 539.2C680.6 541.4 672.3 547.4 665 552.5C657.7 557.6 650.4 561.7 640 570C629.6 578.3 612.9 592.2 602.5 602.5C592.1 612.8 583.8 623.6 577.5 632C571.2 640.4 567.8 646.8 565 653C562.2 659.2 561.5 666.5 560.8 669.2C564.3 671.6 574.6 678.5 582 683.5C589.4 688.5 598.7 695.1 605 699.2C611.3 703.3 613.3 704.8 620 708.3C626.7 711.8 636.9 716.8 645 720.5C653.1 724.2 664.8 729.1 668.7 730.8C676.4 734 699 744.1 715 750C731 755.9 750.4 762.2 765 766C779.6 769.8 792.1 771.7 802.5 772.5C812.9 773.3 819.2 772.7 827.5 771C835.8 769.3 845.8 766.4 852.5 762.5C859.2 758.6 864 752.9 867.5 747.5C871 742.1 872.3 734.2 873.7 730C875.1 725.8 875.6 723.8 876 722.5L877.5 735C876.2 737.9 874.2 746.7 870 752.5C865.8 758.3 859.6 764.8 852.5 770C845.4 775.2 835.8 780.7 827.5 783.7C819.2 786.7 812.9 787.8 802.5 788C792.1 788.2 777.5 786.8 765 785C752.5 783.2 740 779.8 727.5 777.5C715 775.2 699.6 772.5 690 771C680.4 769.5 675.4 768.9 670 768.7C664.6 768.5 659.6 769.8 657.5 770C655.8 771.2 650.8 773.8 647.5 777.5C644.2 781.2 640.6 785.8 637.5 792.5C634.4 799.2 631.2 808.3 628.7 817.5C626.2 826.7 624 837.4 622.5 847.5C621 857.6 620 873.2 619.5 878.4L553 878.4C552.8 870.3 552.7 845.6 552 830C551.3 814.4 550.3 798.3 548.7 785C547.1 771.7 544.8 760.7 542.5 750C540.2 739.3 536.2 725.8 535 721C532.9 716.9 527.9 704.5 522.5 696.5C517.1 688.5 509.6 679.6 502.5 673C495.4 666.4 487.1 660.6 480 656.8C472.9 653 466.1 651.7 460 650C453.9 648.3 450.2 647.7 443.3 646.7C436.4 645.7 426.6 644.6 418.3 644.2C410 643.8 401.6 644 393.3 644.2C385 644.4 376.6 645.2 368.3 645.3C360 645.4 350.2 645.3 343.3 644.7C336.4 644.1 332.2 643.3 326.7 641.7C321.1 640.1 315.6 638.1 310 635C304.4 631.9 298.9 627.8 293.3 623.3C287.8 618.8 282.2 613.6 276.7 608.3C271.1 603 265.6 597 260 591.7C254.4 586.4 250.2 582.3 243.3 576.7C236.4 571.1 226.6 563.6 218.3 558.3C210 553 201.7 548.8 193.3 545C184.9 541.2 172.2 537.3 168 535.8L168 264Z" fill="#1b2124"/>
<path d="M683.7 539.2C686.8 541.4 697.7 547.4 702.5 552.5C707.3 557.6 710.1 563.3 712.5 570C714.9 576.7 716.6 584.6 717 592.5C717.4 600.4 716.6 607.9 715 617.5C713.4 627.1 710.8 639.6 707.5 650C704.2 660.4 699.6 670 695 680C690.4 690 684.4 701.5 680 710C675.6 718.5 670.6 727.3 668.7 730.8C664.8 729.1 653.1 724.2 645 720.5C636.9 716.8 626.7 711.8 620 708.3C613.3 704.8 611.3 703.3 605 699.2C598.7 695.1 589.4 688.5 582 683.5C574.6 678.5 564.3 671.6 560.8 669.2C561.5 666.5 562.2 659.2 565 653C567.8 646.8 571.2 640.4 577.5 632C583.8 623.6 592.1 612.8 602.5 602.5C612.9 592.2 629.6 578.3 640 570C650.4 561.7 657.7 557.6 665 552.5C672.3 547.4 680.6 541.4 683.7 539.2Z" fill="#d93f2e"/>
<g><circle cx="504.8" cy="263.9" r="16" fill="#517275"/><circle cx="596.4" cy="277.4" r="16" fill="#517275"/><circle cx="305.8" cy="251.9" r="16" fill="#517275"/><circle cx="391.5" cy="285.4" r="16" fill="#517275"/><circle cx="479.8" cy="312.5" r="16" fill="#517275"/><circle cx="570.1" cy="333" r="16" fill="#517275"/><circle cx="279.2" cy="283.6" r="16" fill="#517275"/><circle cx="362.1" cy="323.5" r="16" fill="#517275"/><circle cx="448" cy="357.2" r="16" fill="#517275"/><circle cx="536.5" cy="384.5" r="16" fill="#517275"/><circle cx="171.4" cy="259.2" r="16" fill="#517275"/><circle cx="247.2" cy="311" r="16" fill="#517275"/><circle cx="326.8" cy="357.2" r="16" fill="#517275"/><circle cx="409.9" cy="397.3" r="16" fill="#517275"/><circle cx="496.1" cy="431.3" r="16" fill="#517275"/><circle cx="210.4" cy="333.7" r="16" fill="#517275"/><circle cx="286.2" cy="385.8" r="16" fill="#517275"/><circle cx="366" cy="432.1" r="16" fill="#517275"/><circle cx="449.4" cy="472.6" r="16" fill="#517275"/><circle cx="169.3" cy="351.1" r="16" fill="#517275"/><circle cx="240.9" cy="408.7" r="16" fill="#517275"/><circle cx="316.9" cy="461.1" r="16" fill="#517275"/><circle cx="397" cy="507.8" r="16" fill="#517275"/><circle cx="191.6" cy="425.5" r="16" fill="#517275"/><circle cx="263.4" cy="483.5" r="16" fill="#517275"/><circle cx="339.6" cy="536.1" r="16" fill="#517275"/><circle cx="206" cy="498.9" r="16" fill="#517275"/><circle cx="278" cy="557.2" r="16" fill="#517275"/><circle cx="242.8" cy="271" r="12" fill="#d93f2e"/><circle cx="208" cy="296" r="12" fill="#d93f2e"/><circle cx="169" cy="316" r="12" fill="#d93f2e"/><circle cx="357.7" cy="283.2" r="12" fill="#d93f2e"/><circle cx="324" cy="317.7" r="12" fill="#d93f2e"/><circle cx="286" cy="347.7" r="12" fill="#d93f2e"/><circle cx="243.2" cy="373" r="12" fill="#d93f2e"/><circle cx="196.8" cy="393" r="12" fill="#d93f2e"/><circle cx="474" cy="273.5" r="12" fill="#d93f2e"/><circle cx="444.7" cy="318" r="12" fill="#d93f2e"/><circle cx="408.9" cy="358" r="12" fill="#d93f2e"/><circle cx="367.2" cy="393.8" r="12" fill="#d93f2e"/><circle cx="321.3" cy="424.5" r="12" fill="#d93f2e"/><circle cx="271.2" cy="450" r="12" fill="#d93f2e"/><circle cx="217.7" cy="469.2" r="12" fill="#d93f2e"/><circle cx="566.2" cy="296.3" r="12" fill="#d93f2e"/><circle cx="534.2" cy="346.8" r="12" fill="#d93f2e"/><circle cx="496" cy="393" r="12" fill="#d93f2e"/><circle cx="452" cy="433.5" r="12" fill="#d93f2e"/><circle cx="403.2" cy="470.8" r="12" fill="#d93f2e"/><circle cx="349.8" cy="501.7" r="12" fill="#d93f2e"/><circle cx="292.3" cy="526.2" r="12" fill="#d93f2e"/><circle cx="206.3" cy="266.8" r="8" fill="#ec9b2e"/><circle cx="169.5" cy="287.7" r="8" fill="#ec9b2e"/><circle cx="322.5" cy="284.7" r="8" fill="#ec9b2e"/><circle cx="286.3" cy="316" r="8" fill="#ec9b2e"/><circle cx="246.5" cy="343.7" r="8" fill="#ec9b2e"/><circle cx="203" cy="366.8" r="8" fill="#ec9b2e"/><circle cx="442.2" cy="285.7" r="8" fill="#ec9b2e"/><circle cx="408.3" cy="326" r="8" fill="#ec9b2e"/><circle cx="369.7" cy="362.2" r="8" fill="#ec9b2e"/><circle cx="326.8" cy="394.7" r="8" fill="#ec9b2e"/><circle cx="280.3" cy="422.4" r="8" fill="#ec9b2e"/><circle cx="230" cy="445.5" r="8" fill="#ec9b2e"/><circle cx="563.3" cy="268.5" r="8" fill="#ec9b2e"/><circle cx="532.7" cy="316" r="8" fill="#ec9b2e"/><circle cx="496.7" cy="361.8" r="8" fill="#ec9b2e"/><circle cx="455.8" cy="403.3" r="8" fill="#ec9b2e"/><circle cx="410.3" cy="440.8" r="8" fill="#ec9b2e"/><circle cx="360.8" cy="473.3" r="8" fill="#ec9b2e"/><circle cx="307.8" cy="501" r="8" fill="#ec9b2e"/></g>
<path d="M397 548C410.8 538.3 455.6 508 480 490C504.4 472 529.5 450.6 543.3 439.8C557 429 559.3 427.5 562.5 425C562 427.8 559.8 436.7 559.7 441.7C559.6 446.7 560.3 450.3 561.7 455C563.1 459.7 565.5 465.6 568.3 470C571.1 474.4 575 478.5 578.3 481.7C581.6 484.9 586.6 487.9 588.3 489.2C570.2 495 511.9 514.4 480 524.2C448.1 534 410.8 544 397 548Z" fill="#ec9b2e"/>
<path d="M543.8 438.5L548.3 435C547.9 438.8 545.8 450.5 545.8 458C545.8 465.5 546.5 473 548 480C549.5 487 553.4 496.5 554.5 499.8L552.3 500.6C551 497.3 546.1 488 544.3 481C542.5 474 541.4 465.6 541.3 458.5C541.2 451.4 543.4 441.8 543.8 438.5Z" fill="#1b2124"/>
<path d="M562.8 424.500C559.500 436 559.500 447 561.700 455C564 463 570 473.500 578.300 481.700C581.500 484.800 585 487.300 588.600 489.400" fill="none" stroke="#1b2124" stroke-width="2.200"/>
<path d="M168 535.8C172.2 537.3 184.9 541.2 193.3 545C201.7 548.8 210 553 218.3 558.3C226.6 563.6 236.4 571.1 243.3 576.7C250.2 582.3 254.4 586.4 260 591.7C265.6 597 271.1 603 276.7 608.3C282.2 613.6 287.8 618.8 293.3 623.3C298.9 627.8 304.4 631.9 310 635C315.6 638.1 321.1 640.1 326.7 641.7C332.2 643.3 336.4 644.1 343.3 644.7C350.2 645.3 360 645.4 368.3 645.3C376.6 645.2 385 644.4 393.3 644.2C401.6 644 410 643.8 418.3 644.2C426.6 644.6 436.4 645.7 443.3 646.7C450.2 647.7 453.9 648.3 460 650C466.1 651.7 472.9 653 480 656.8C487.1 660.6 495.4 666.4 502.5 673C509.6 679.6 517.1 688.5 522.5 696.5C527.9 704.5 532.9 716.9 535 721C531.7 720.5 522.5 718.8 515 718C507.5 717.2 498.3 715.9 490 716C481.7 716.1 473.3 717 465 718.7C456.7 720.4 448.3 722.7 440 726C431.7 729.3 422.5 734.6 415 738.7C407.5 742.8 398.3 748.5 395 750.5C393.8 747.1 390.4 737.6 387.5 730C384.6 722.4 381.2 712.5 377.5 705C373.8 697.5 369.2 690.2 365 685C360.8 679.8 357.5 676.7 352.5 673.7C347.5 670.7 341.2 668 335 667C328.8 666 322.5 666 315 667.5C307.5 669 298.3 672.5 290 676C281.7 679.5 273.3 684.1 265 688.7C256.7 693.3 250.4 697.2 240 703.7C229.6 710.2 214.5 719.8 202.5 727.5C190.5 735.2 173.8 746.2 168 750L168 535.8Z" fill="#d93f2e"/>
<path d="M168 750C173.8 746.2 190.5 735.2 202.5 727.5C214.5 719.8 229.6 710.2 240 703.7C250.4 697.2 256.7 693.3 265 688.7C273.3 684.1 281.7 679.5 290 676C298.3 672.5 307.5 669 315 667.5C322.5 666 328.8 666 335 667C341.2 668 347.5 670.7 352.5 673.7C357.5 676.7 360.8 679.8 365 685C369.2 690.2 373.8 697.5 377.5 705C381.2 712.5 384.6 722.4 387.5 730C390.4 737.6 393.8 747.1 395 750.5C392.1 752.5 384.6 756.8 377.5 762.5C370.4 768.2 360.8 777.1 352.5 785C344.2 792.9 334.6 802.9 327.5 810C320.4 817.1 316.2 822.1 310 827.5C303.8 832.9 296.7 838.8 290 842.5C283.3 846.2 276.2 848.7 270 850C263.8 851.3 258.3 851.2 252.5 850.5C246.7 849.8 241.2 848.2 235 846C228.8 843.8 221.7 840.6 215 837.5C208.3 834.4 201.2 830.6 195 827.5C188.8 824.4 182 820.7 177.5 818.7C173 816.7 169.6 816.2 168 815.7L168 750Z" fill="#ec9b2e"/>
<path d="M395 750.5C398.3 748.5 407.5 742.8 415 738.7C422.5 734.6 431.7 729.3 440 726C448.3 722.7 456.7 720.4 465 718.7C473.3 717 481.7 716.1 490 716C498.3 715.9 507.5 717.2 515 718C522.5 718.8 531.7 720.5 535 721C536.2 725.8 540.2 739.3 542.5 750C544.8 760.7 547.1 771.7 548.7 785C550.3 798.3 551.3 814.4 552 830C552.7 845.6 552.8 870.3 553 878.4L457.5 878.4C454.6 874.9 445 864.3 440 857.5C435 850.7 431.7 845.4 427.5 837.5C423.3 829.6 419.2 820.4 415 810C410.8 799.6 405.8 784.9 402.5 775C399.2 765.1 396.2 754.6 395 750.5Z" fill="#517275"/>
<path d="M588.3 489.2C592.5 487.9 603.6 484.5 613.3 481.2C623 477.9 635.6 473.5 646.7 469.2C657.8 464.9 668.9 460.1 680 455.5C691.1 450.9 703.3 445.9 713.3 441.7C723.3 437.5 727.2 436.4 740 430.3C752.8 424.2 776.7 411.4 790 405C803.3 398.6 810.8 396.9 820 391.7C829.2 386.5 836.8 379.9 845 374C853.2 368.1 865 359 869 356C868.2 359.7 864.9 372 864 378C863.1 384 863.9 388.3 863.5 392C863.1 395.7 863.4 395.2 861.7 400C860 404.8 856.1 414.1 853.3 420.8C850.5 427.5 847.8 433.8 845 440C842.2 446.2 839.5 452.5 836.7 458.3C833.9 464.1 831.1 470.2 828.3 475C825.5 479.8 821.4 485 820 487C816.7 490 811.7 498.2 800 505C788.3 511.8 765.8 522.2 750 528C734.2 533.8 716 538.1 705 540C694 541.9 687.2 539.3 683.7 539.2C678.9 536.4 666 528.2 655 522.5C644 516.8 628.6 510.6 617.5 505C606.4 499.4 593.2 491.8 588.3 489.2Z" fill="#517275"/>
<path d="M683.7 539.2C688.9 536.4 703.5 528.2 715 522.5C726.5 516.8 740 510 752.5 505C765 500 778.8 495.7 790 492.5C801.2 489.3 815 487.1 820 486C818.3 488.8 815 496.4 810 502.5C805 508.6 797.5 516.7 790 522.5C782.5 528.3 773.3 533.7 765 537.5C756.7 541.3 748.3 544.1 740 545.5C731.7 546.9 722.5 546.5 715 546C707.5 545.5 700.2 543.6 695 542.5C689.8 541.4 685.6 539.8 683.7 539.2Z" fill="#1b2124"/>
<path d="M681.7 264C681.6 266.4 681.4 273.5 680.8 278.7C680.2 283.9 679.5 289.8 678 295.3C676.5 300.9 674.6 306.4 672 312C669.4 317.6 666.3 323.4 662.5 328.7C658.7 334 653.8 339.3 649.2 343.7C644.6 348.1 639.7 352.2 635 355.3C630.3 358.4 623.2 360.9 620.8 362C622.9 360.3 629.3 355.6 633.3 352C637.3 348.4 641.4 344.5 645 340.3C648.6 336.1 652.2 331.7 655 327C657.8 322.3 659.9 317.3 661.7 312C663.5 306.7 664.8 300.9 665.8 295.3C666.8 289.8 667.6 283.9 668 278.7C668.4 273.5 668.2 266.4 668.3 264Z" fill="#eedcb9"/>
<path d="M665 264C665 266.4 665.1 273.5 664.7 278.7C664.3 283.9 663.5 289.8 662.5 295.3C661.5 300.9 660.5 306.7 658.7 312C656.9 317.3 654.5 322.3 651.7 327C648.9 331.7 645.3 336.1 641.7 340.3C638.1 344.5 633.9 348.4 630 352C626.1 355.6 622.2 358.7 618.3 362C614.4 365.3 610.9 368.4 606.7 372C602.5 375.6 597.5 380.1 593.3 383.7C589.1 387.3 584.6 391.3 581.7 393.7C578.8 396.1 576.8 397.1 575.8 397.8C577.6 396.1 582.7 391.4 586.7 387.8C590.7 384.2 595.6 380.1 600 376.2C604.4 372.3 608.8 368.4 613.3 364.5C617.8 360.6 622.4 356.8 626.7 352.8C631 348.8 635.5 344.6 639.2 340.3C643 336 646.4 331.7 649.2 327C652 322.3 654.1 317.3 655.8 312C657.5 306.7 658.6 300.9 659.5 295.3C660.4 289.8 660.7 283.9 661 278.7C661.3 273.5 661.2 266.4 661.3 264Z" fill="#eedcb9"/>
<path d="M653.3 264L655.8 264C655.7 266.7 656 274.4 655.3 280C654.5 285.6 652 294.8 651.3 297.8C651.6 294.8 652.9 285.6 653.2 280C653.5 274.4 653.3 266.7 653.3 264Z" fill="#eedcb9"/>
<path d="M648.3 264L650.8 264C650.6 266.4 650.6 272.9 649.8 278.7C649 284.5 647.5 292.7 646 298.7C644.5 304.7 641.4 311.9 640.5 314.5C641.1 311.8 642.9 304 644 298C645.1 292 646.6 284.4 647.3 278.7C648 273 648.1 266.4 648.3 264Z" fill="#eedcb9"/>
<path d="M624.7 336.2C622.4 338.9 616 346.9 611 352.5C606 358.1 599.8 364.7 595 369.5C590.2 374.3 585.4 378.8 582.5 381.5C579.6 384.2 578.3 385 577.5 385.7C578 384.7 578.1 382.7 580.5 379.5C582.9 376.3 587.2 371.3 592 366.5C596.8 361.7 603.5 355.6 609 350.5C614.5 345.4 622.1 338.6 624.7 336.2Z" fill="#eedcb9"/>
<path d="M661.7 365.5C666.4 361.7 681.1 349.2 690 342.5C698.9 335.8 706.7 330 715 325C723.3 320 731.7 315.4 740 312.5C748.3 309.6 756.7 307.9 765 307.5C773.3 307.1 781.7 308.3 790 310C798.3 311.7 808.8 315.2 815 317.5C821.2 319.8 824.6 321.6 827.5 323.7C830.4 325.8 831.9 327.7 832.5 330C833.1 332.3 832.2 335.7 831 337.5C829.8 339.3 826 340.4 825 341C821.2 340.6 809.2 339.7 802.5 338.7C795.8 337.7 791.2 336.4 785 335C778.8 333.6 772.5 331.2 765 330.5C757.5 329.8 748.3 329.6 740 331C731.7 332.4 723.3 335.5 715 338.7C706.7 341.9 698.9 345.5 690 350C681.1 354.5 666.4 362.9 661.7 365.5Z" fill="#1b2124"/>
<path d="M802.5 339C800.8 340.8 794.8 346.1 792.5 350C790.2 353.9 789.5 358.3 788.7 362.5C787.9 366.7 787.5 370.4 787.5 375C787.5 379.6 788.3 385.3 788.7 390C789.1 394.7 789.8 400.8 790 403C790.8 403.4 793.3 406 795 405.5C796.7 405 796.7 403.4 800 400C803.3 396.6 810.4 390 815 385C819.6 380 824.8 374.2 827.5 370C830.2 365.8 830.6 363.3 831 360C831.4 356.7 831 353.2 830 350C829 346.8 825.8 342.5 825 341L802.5 339Z" fill="#1b2124"/>
<path d="M696 399.5C703.3 398.4 724.8 397 740 393C755.2 389 779.6 378.4 787.5 375.5L788 378.5C782.1 380.6 764.7 387.3 752.5 391C740.3 394.7 724.4 399.1 715 400.5C705.6 401.9 699.2 399.7 696 399.5Z" fill="#1b2124"/>
<path d="M678.7 403C682.7 403.5 694.8 405.9 702.5 406C710.2 406.1 718.8 403.7 725 403.7C731.2 403.7 733.3 405.4 740 406C746.7 406.6 756.7 407.4 765 407C773.3 406.6 785 404 790 403.7C795 403.4 794.2 404.8 795 405C796.2 406.7 798.8 412.1 802.5 415C806.2 417.9 815 421.2 817.5 422.5L805 425L810 428L797.5 427.5C796.2 428.8 793.3 432.1 790 435C786.7 437.9 781.7 442.3 777.5 445C773.3 447.7 767.1 450 765 451C763.8 450.4 760.4 449.8 757.5 447.5C754.6 445.2 750.8 440.8 747.5 437.5C744.2 434.2 740.8 430.4 737.5 427.5C734.2 424.6 731.2 421.9 727.5 420C723.8 418.1 718.8 417.2 715 416C711.2 414.8 709.2 413.9 705 412.5C700.8 411.1 694.4 409.1 690 407.5C685.6 405.9 680.6 403.8 678.7 403Z" fill="#1b2124"/>
<path d="M879.2 265.4C879.6 268 880.6 275.9 881.7 280.8C882.8 285.7 884.7 290.8 885.8 295C886.9 299.2 887.9 302.8 888.5 306C889.1 309.2 889.6 311.2 889.3 314C889 316.8 888 319.5 886.5 323C885 326.5 882.2 330.6 880 335C877.8 339.4 875.5 344.6 873.3 349.6C871.1 354.6 868.3 360.4 866.7 365C865.1 369.6 864.3 373.3 863.7 377.5C863.1 381.7 863 385.8 863.3 390C863.6 394.2 864.6 398.8 865.4 402.5C866.2 406.2 867 409 868.3 412.5C869.6 416 871.6 420.2 873.3 423.3C875 426.4 877.5 429.6 878.3 430.8C879 430.9 879.7 431.4 882.5 431.5C885.3 431.6 891.5 431.4 895 431.2C898.5 430.9 902.2 430.2 903.7 430L900 428.3L910.4 422.5C908.5 422.1 903.2 421.4 899.2 420C895.2 418.6 890.3 416.4 886.7 414.2C883.1 412 879 407.9 877.5 406.7C877.4 405.6 877.4 402.8 877 400C876.6 397.2 875.8 393.1 875 390C874.2 386.9 872.8 384.5 872.5 381.7C872.2 378.9 872.6 376.1 873.3 373.3C874 370.5 874.8 368.9 876.7 365C878.7 361.1 882.9 354.6 885 349.6C887.1 344.6 888.1 339.1 889.2 335C890.3 330.9 891 328.1 891.5 325C892 321.9 892.5 319.8 892.3 316.7C892.1 313.6 891.4 310.3 890.5 306.7C889.6 303.1 888.5 299.3 887.2 295C886 290.7 884.2 285.7 883 280.8C881.8 275.9 880.3 268 879.8 265.4Z" fill="#1b2124"/>
<path d="M878 430C882 437 886 443 890.8 450C895 456 899 461 903.3 466.7C906 470.500 909 475 911.7 479.2C915 484.500 919 493 922.5 502.5" fill="none" stroke="#1b2124" stroke-width="1.2"/>
<path d="M823.7 547.5C826.4 547.7 834 549.5 840 548.7C846 547.9 853.8 545 860 542.5C866.2 540 871.7 535.6 877.5 533.7C883.3 531.8 890 531.7 895 531C900 530.3 904.3 530.7 907.5 529.5C910.7 528.3 912.9 524.8 914 523.8C914.8 523.8 917.1 523 918.5 523.5C919.9 524 921.7 526 922.3 526.5C921.1 527.9 918.3 532.1 915 535C911.7 537.9 906.7 541.4 902.5 543.7C898.3 546 893.3 546.8 890 548.7C886.7 550.6 884 552.3 882.5 555C881 557.7 880.6 561.9 881 565C881.4 568.1 883.7 571.4 885 573.7C886.3 576 888.1 577.9 888.7 578.7C887.4 577.7 883.1 575.2 881 572.5C878.9 569.8 877.2 565.8 876 562.5C874.8 559.2 874.1 554.2 873.7 552.5C872.2 552.7 868.5 552.8 865 553.7C861.5 554.6 856.7 557.2 852.5 558C848.3 558.8 843.8 559.4 840 558.7C836.2 558 832.7 555.6 830 553.7C827.3 551.8 824.8 548.5 823.7 547.5Z" fill="#1b2124"/>
<path d="M874.500 550.200C880 544.500 889 541.200 897.500 540.800C893 546.500 884 549.800 874.500 550.200Z" fill="#ec9b2e"/>
<path d="M807.5 660.5C808.3 658.8 810 653.6 812.5 650C815 646.4 819.6 641.1 822.5 638.7C825.4 636.3 827.1 637 830 635.5C832.9 634 836.2 632.4 840 630C843.8 627.6 848.3 623.9 852.5 621C856.7 618.1 860.6 615.7 865 612.5C869.4 609.3 876.4 603.5 878.7 601.7C880.6 602.4 887.3 605 890 606C892.7 607 894.2 607.2 895 607.5L900 599.5C900.4 600.4 902.3 602.4 902.5 605C902.7 607.6 902.1 611.7 901 615C899.9 618.3 897.8 622.1 896 625C894.2 627.9 891.7 630.4 890 632.5C888.3 634.6 886.7 636.7 886 637.5C887.1 638.3 891 640.8 892.5 642.5C894 644.2 894.6 646.7 895 647.5C893.3 647.6 888.8 648.2 885 648C881.2 647.8 876.7 646.4 872.5 646C868.3 645.6 865.4 645 860 645.5C854.6 646 846.2 647.3 840 648.7C833.8 650.1 827.9 651.7 822.5 653.7C817.1 655.7 810 659.4 807.5 660.5Z" fill="#1b2124"/>
<path d="M830 672.5C832.5 672.8 839.2 674.1 845 674.5C850.8 674.9 859.6 675.3 865 675C870.4 674.7 873.5 673.5 877.5 672.5C881.5 671.5 886.8 669.3 888.7 668.7L887.5 662.5C888.8 663.1 892.9 665.4 895 666C897.1 666.6 899.2 666 900 666C899.6 667.3 899.2 671.4 897.5 673.7C895.8 676 892.9 678.1 890 680C887.1 681.9 882.3 682.9 880 685C877.7 687.1 877 689.2 876 692.5C875 695.8 873.9 701.1 873.7 705C873.5 708.9 874.8 714.2 875 716C873.3 715.2 868.8 712.2 865 711C861.2 709.8 856 709.9 852.5 708.7C849 707.5 845.2 704.5 843.7 703.7C844.8 701.4 848.5 693 850 690C851.5 687 852.1 686.7 852.5 686C850.4 684.8 843.8 681 840 678.7C836.2 676.5 831.7 673.5 830 672.5Z" fill="#1b2124"/>
</g>
<g fill="none" stroke="#00a8ff" stroke-width="1.100"><circle cx="241.1" cy="183.4" r="16"/><circle cx="326.7" cy="216.8" r="16"/><circle cx="414.7" cy="243.6" r="16"/><circle cx="504.8" cy="263.9" r="16"/><circle cx="596.4" cy="277.4" r="16"/><circle cx="223" cy="212.2" r="16"/><circle cx="305.8" cy="251.9" r="16"/><circle cx="391.5" cy="285.4" r="16"/><circle cx="479.8" cy="312.5" r="16"/><circle cx="570.1" cy="333" r="16"/><circle cx="199.6" cy="237.6" r="16"/><circle cx="279.2" cy="283.6" r="16"/><circle cx="362.1" cy="323.5" r="16"/><circle cx="448" cy="357.2" r="16"/><circle cx="536.5" cy="384.5" r="16"/><circle cx="171.4" cy="259.2" r="16"/><circle cx="247.2" cy="311" r="16"/><circle cx="326.8" cy="357.2" r="16"/><circle cx="409.9" cy="397.3" r="16"/><circle cx="496.1" cy="431.3" r="16"/><circle cx="138.7" cy="276.2" r="16"/><circle cx="210.4" cy="333.7" r="16"/><circle cx="286.2" cy="385.8" r="16"/><circle cx="366" cy="432.1" r="16"/><circle cx="449.4" cy="472.6" r="16"/><circle cx="102.2" cy="288.3" r="16"/><circle cx="169.3" cy="351.1" r="16"/><circle cx="240.9" cy="408.7" r="16"/><circle cx="316.9" cy="461.1" r="16"/><circle cx="397" cy="507.8" r="16"/><circle cx="62.4" cy="294.8" r="16"/><circle cx="124.5" cy="362.5" r="16"/><circle cx="191.6" cy="425.5" r="16"/><circle cx="263.4" cy="483.5" r="16"/><circle cx="339.6" cy="536.1" r="16"/><circle cx="20" cy="295.4" r="16"/><circle cx="76.8" cy="367.7" r="16"/><circle cx="138.8" cy="435.6" r="16"/><circle cx="206" cy="498.9" r="16"/><circle cx="278" cy="557.2" r="16"/><path d="M109.3 49L617.5 269.1L452.4 650.2L-55.7 430.1Z"/></g><rect x="106.6" y="46.3" width="5.400" height="5.400" fill="#fff" stroke="#00a8ff" stroke-width="1"/><rect x="614.8" y="266.4" width="5.400" height="5.400" fill="#fff" stroke="#00a8ff" stroke-width="1"/><rect x="449.7" y="647.5" width="5.400" height="5.400" fill="#fff" stroke="#00a8ff" stroke-width="1"/><rect x="-58.4" y="427.4" width="5.400" height="5.400" fill="#fff" stroke="#00a8ff" stroke-width="1"/><rect x="360.7" y="156.4" width="5.400" height="5.400" fill="#fff" stroke="#00a8ff" stroke-width="1"/><rect x="532.2" y="456.9" width="5.400" height="5.400" fill="#fff" stroke="#00a8ff" stroke-width="1"/><rect x="195.6" y="537.4" width="5.400" height="5.400" fill="#fff" stroke="#00a8ff" stroke-width="1"/><rect x="24.1" y="236.9" width="5.400" height="5.400" fill="#fff" stroke="#00a8ff" stroke-width="1"/>
<path d="M280.3 344.700L281.300 348.700L285.300 349.700L281.300 350.700L280.300 354.700L279.300 350.700L275.300 349.700L279.300 348.700Z" fill="#ffc83d"/>
</svg><div class="a" style="left:1517px;top:88px;width:16px;height:968px;background:#333;border-radius:0 0 6px 0"></div><div class="a" style="left:32px;top:1040px;width:1501px;height:16px;background:#333"></div><div class="a" style="left:1517px;top:469px;width:16px;height:229px;background:#555;border-radius:2px"></div><div class="a" style="left:618px;top:1040px;width:352px;height:16px;background:#555;border-radius:2px"></div><svg class="a" style="left:0px;top:0px" width="1" height="1" viewBox="0 0 1 1" ><path d="M1520 99.500H1530L1525 91.500ZM1520 1028H1530L1525 1036ZM44.500 1043V1053L36.500 1048ZM1504.500 1043V1053L1512.500 1048Z" fill="#555"/></svg><div class="a" style="left:0;top:88px;width:32px;height:968px;background:#333"></div><div class="a" style="left:0;top:88px;width:32px;height:32px;background:#eee;border-radius:0 2px 2px 0"></div><div class="a" style="left:4px;top:292px;width:24px;height:1px;background:#555"></div><div class="a" style="left:4px;top:605px;width:24px;height:1px;background:#555"></div><svg class="a" style="left:0px;top:0px" width="1" height="1" viewBox="0 0 1 1" ><path d="M9.500 95.500V109.500L13.800 105.800L20 104.800Z" fill="none" stroke="#222" stroke-width="1.900" stroke-linejoin="miter"/><path d="M21.600 106V115M17.100 110.500H26.100" stroke="#222" stroke-width="1.200" fill="none"/><path d="M21.600 104.500L19.600 107H23.600ZM21.600 116.500L19.600 114H23.600ZM15.600 110.500L18.100 108.500V112.500ZM27.600 110.500L25.100 108.500V112.500Z" fill="#222"/><path d="M10.200 124V142.500H28.700M4 129.500H23.100V148" fill="none" stroke="#eee" stroke-width="2"/><path d="M12 140.500L27.500 125" stroke="#aaa" stroke-width="1.500"/><path d="M11.500 159.500A8 8 0 1 0 21.500 171.500" fill="none" stroke="#eee" stroke-width="2.200"/><path d="M14 162.500A4.500 4.500 0 0 0 12 169" fill="none" stroke="#eee" stroke-width="1.300"/><path d="M20.500 171L27 177.500" stroke="#eee" stroke-width="3" stroke-linecap="round"/><path d="M15 158.500A8 8 0 0 1 23.300 164" fill="none" stroke="#aaa" stroke-width="1.800"/><path d="M12.500 158.500L16.500 156V161ZM23.500 168L21 163.500H26Z" fill="#aaa"/><path d="M6.500 209.500L8 205L16.500 196.500L19.500 199.500L11 208Z" fill="none" stroke="#eee" stroke-width="1.500" stroke-linejoin="round"/><path d="M16 194.500L21.500 200" stroke="#aaa" stroke-width="2.600" stroke-linecap="round"/><path d="M18.500 197L23 192.500" stroke="#aaa" stroke-width="4"/><circle cx="23.800" cy="192" r="3.300" fill="#aaa"/><path d="M4.600 234L15.500 224L24 232.500L14 243.500Z" fill="none" stroke="#eee" stroke-width="1.600" stroke-linejoin="round"/><path d="M15.500 224Q17 229 24 232.500" fill="none" stroke="#eee" stroke-width="1.200"/><path d="M11 221.500L14 233" stroke="#eee" stroke-width="1.400"/><circle cx="14" cy="233.500" r="1.500" fill="#eee"/><path d="M25.500 233.500Q29 239 28.500 241.500Q27.500 244.500 25 244.500Q22 244.500 21.500 241.500Q21.500 239 25.500 233.500Z" fill="#aaa"/><linearGradient id="tg" x1="0" x2="1" y1="0" y2="0"><stop offset="0" stop-color="#eee"/><stop offset="0.350" stop-color="#bbb"/><stop offset="1" stop-color="#3a3a3a"/></linearGradient><rect x="6.700" y="257" width="18.600" height="14.500" fill="url(#tg)" stroke="#eee" stroke-width="1.400"/><path d="M9 311V327L19 321Z" fill="#eee"/><path d="M9 331L16 328M19 326L25 323" stroke="#5ab5e8" stroke-width="1.5"/><rect x="15.500" y="324.5" width="4" height="4" fill="none" stroke="#5ab5e8" stroke-width="1.3"/><path d="M6 362L9 351L17 346L23 352L18 360Z" fill="none" stroke="#eee" stroke-width="1.6" stroke-linejoin="round"/><path d="M6 362L13 355" stroke="#eee" stroke-width="1.3"/><path d="M18 344Q22 340 26 344Q28 348 25 351Z" fill="#5ab5e8"/><path d="M8 391L10 384L20 374L25 379L15 389Z" fill="#5ab5e8" stroke="#eee" stroke-width="1.3" stroke-linejoin="round"/><path d="M5 394Q12 390 17 393Q22 395 27 389" fill="none" stroke="#eee" stroke-width="1.4"/><path d="M7 426L12 425M15 414L13 409M17 408L23 407" stroke="#eee" stroke-width="1.6"/><circle cx="13" cy="412" r="2" fill="#5ab5e8"/><circle cx="18" cy="422" r="2" fill="#5ab5e8"/><path d="M7 456L24 440" stroke="#eee" stroke-width="2"/><path d="M10 459L26 444" stroke="#5ab5e8" stroke-width="2"/><rect x="7.200" y="474.200" width="17.600" height="13.600" fill="#5ab5e8" stroke="#eee" stroke-width="2.400"/><ellipse cx="16" cy="513" rx="8.800" ry="6.800" fill="#5ab5e8" stroke="#eee" stroke-width="2.400"/><path d="M16 536L25 543L21.500 554H10.500L7 543Z" fill="#5ab5e8" stroke="#eee" stroke-width="2.400" stroke-linejoin="round"/><path d="M8 568H24V572H23Q22.500 570 20 570H17.500V583Q17.500 585 20 585V586H12V585Q14.500 585 14.500 583V570H12Q9.500 570 9 572H8Z" fill="#eee"/><path d="M5 586.5H27" stroke="#5ab5e8" stroke-width="1.5" stroke-dasharray="3 2"/><path d="M14 635L24 622Q26 621 26 624L17 638Z" fill="#eee"/><path d="M7 643Q9 642 10 638Q12 635 15 637Q17 640 14 642Q11 644 7 643Z" fill="#e0a848"/><path d="M5.500 669.500L18.500 656.500Q22 653.500 25.500 657Q28.500 660.500 25.500 664L12.500 677Q9 680 5.500 676.500Q2.500 673 5.500 669.500Z" fill="#6e5d3f"/><path d="M16 660.500L21.500 666L16 671.500L10.500 666Z" fill="#606060"/><g fill="#333"><circle cx="16" cy="663.500" r="0.800"/><circle cx="13.500" cy="666" r="0.800"/><circle cx="18.500" cy="666" r="0.800"/><circle cx="16" cy="668.500" r="0.800"/><circle cx="16" cy="666" r="0.800"/></g><path d="M12 692.500Q12 688 16 688Q20 688 20 692.500Q20 695 18.500 697L18.500 699.500H24.500V704.500H7.500V699.500H13.500L13.500 697Q12 695 12 692.500Z" fill="#606060"/><path d="M7.500 706.800H24.500" stroke="#6e5d3f" stroke-width="1.300"/><path d="M9 721.500L12.500 724L14 720.500L17 723.500L20.500 720L21 724.500L26 723.500L23.500 727.500L27.500 729.500L24 732L26.500 736L22 735.500L21.500 740L18 737L15.500 741L13.500 737L9.500 739.500L10.500 735L5.500 734L9 731L5.500 727.500L10 726.500Z" fill="#606060"/><path d="M16.700 752L27.800 771H5.500Z" fill="none" stroke="#6e5d3f" stroke-width="1.200" stroke-linejoin="round"/><path d="M16.700 752.500Q22.500 760 22.500 764.500Q22.500 770 16.700 770Q11 770 11 764.500Q11 760 16.700 752.500Z" fill="#606060"/><path d="M14 762Q13 766 15.500 768" stroke="#333" stroke-width="1.200" fill="none"/><path d="M9.500 795L20.500 785.500L24 782.500L27.500 786L24.500 789.500L14 800Q11.500 801.500 9.500 799.500Q8 797.500 9.500 795Z" fill="#6e5d3f"/><path d="M19 788L22 791" stroke="#333" stroke-width="1.200"/><path d="M5 796.500L7.500 798M4.500 801.500H7.500M7 806L9 803.500M11.500 806.500V803.500" stroke="#606060" stroke-width="1.300"/><path d="M16.700 816.500Q22.700 816.500 22.700 822.500Q22.700 826 20 828.500V831H13.400V828.500Q10.700 826 10.700 822.500Q10.700 816.500 16.700 816.500Z" fill="#606060"/><path d="M13.800 833H19.600M14.800 835H18.600" stroke="#606060" stroke-width="1.300"/><path d="M16.700 811V813.500M9.500 814.500L11 816M24 814.500L22.500 816M6.500 822H8.500M25 822H27M8.500 829L10 828M25 829L23.500 828" stroke="#606060" stroke-width="1.200"/><path d="M16.700 819V825" stroke="#6e5d3f" stroke-width="1.800"/><circle cx="16.700" cy="827.500" r="1" fill="#6e5d3f"/></svg><div class="a" style="left:3px;top:1008px;width:26px;height:26px;border-radius:13px;background:#fff;border:2px solid #222"></div><div class="a" style="left:3px;top:988px;width:26px;height:26px;border-radius:13px;background:#000;border:2px solid #222"></div><svg class="a" style="left:0px;top:0px" width="1" height="1" viewBox="0 0 1 1" ><path d="M5.500 1050V1043.500M5.500 1043L3.500 1046H7.500ZM10.500 1046V1052.500M10.500 1053L8.500 1050H12.500Z" stroke="#eee" stroke-width="1.3" fill="#eee"/><rect x="20.500" y="1043.500" width="7" height="10" rx="3.500" fill="none" stroke="#eee" stroke-width="1.3"/><circle cx="24" cy="1047" r="2.600" fill="#eee"/></svg><div class="a" style="left:1537px;top:28px;width:383px;height:461px;background:#333;border-radius:6px"></div><div class="a" style="left:1537px;top:28px;width:383px;height:28px;background:#111;border-radius:6px 6px 0 0"></div><div class="a" style="left:1537px;top:28px;width:78px;height:28px;background:#333;border-radius:6px 6px 0 0"></div><div class="a" style="left:1615px;top:50px;width:6px;height:6px;background:radial-gradient(circle at 100% 0,#111 5.500px,#333 6px)"></div><div class="t " style="left:1545px;top:35px;transform:scaleX(0.9779);transform-origin:0 50%;">Properties</div><div class="sec" style="top:57.5px"></div><div class="body" style="top:81px;height:104px"></div><svg class="a" style="left:1548px;top:66.5px" width="10" height="6" viewBox="0 0 10 6" ><path d="M1 1L5 5L9 1" fill="none" stroke="#eee" stroke-width="1.6"/></svg><div class="t b" style="left:1565px;top:61.5px;transform:scaleX(0.9597);transform-origin:0 50%;">Repeat</div><svg class="a" style="left:1547px;top:95px" width="11" height="12" viewBox="0 0 11 12" ><path d="M1.2 1.200L9.800 6L1.200 10.800Z" fill="none" stroke="#8d807c" stroke-width="1.200" stroke-linejoin="round"/></svg><div class="t " style="left:1565px;top:94px;transform:scaleX(0.9918);transform-origin:0 50%;">Direction</div><div class="f" style="left:1708px;top:89px;width:93px"></div><div class="f" style="left:1805px;top:89px;width:92px"></div><div class="t " style="left:1715px;top:94px;">X</div><div class="t " style="left:1813px;top:94px;">Y</div><div class="t tr" style="left:1708px;width:85px;text-align:right;top:94px">0</div><div class="t tr" style="left:1805px;width:84px;text-align:right;top:94px">416.7</div><svg class="a" style="left:1547px;top:127px" width="11" height="12" viewBox="0 0 11 12" ><path d="M1.2 1.200L9.800 6L1.200 10.800Z" fill="none" stroke="#8d807c" stroke-width="1.200" stroke-linejoin="round"/></svg><div class="t " style="left:1565px;top:126px;transform:scaleX(0.9459);transform-origin:0 50%;">Angle</div><div class="f" style="left:1708px;top:121px;width:189px"></div><div class="a" style="left:1709px;top:122px;width:108.5px;height:22px;background:#222;border-radius:1px"></div><div class="a" style="left:1816px;top:122px;width:3px;height:22px;background:#555;border-radius:1px"></div><div class="t tc" style="left:1708px;width:189px;text-align:center;top:126px">30.6°</div><svg class="a" style="left:1547px;top:159px" width="11" height="12" viewBox="0 0 11 12" ><path d="M1.2 1.200L9.800 6L1.200 10.800Z" fill="none" stroke="#8d807c" stroke-width="1.200" stroke-linejoin="round"/></svg><div class="t " style="left:1565px;top:158px;transform:scaleX(0.9469);transform-origin:0 50%;">Instances</div><div class="f" style="left:1708px;top:153px;width:189px"></div><div class="t tc" style="left:1708px;width:189px;text-align:center;top:158px">8</div><div class="sec" style="top:189.5px"></div><div class="body" style="top:213px;height:104px"></div><svg class="a" style="left:1548px;top:198.5px" width="10" height="6" viewBox="0 0 10 6" ><path d="M1 1L5 5L9 1" fill="none" stroke="#eee" stroke-width="1.6"/></svg><div class="t b" style="left:1565px;top:193.5px;transform:scaleX(0.9597);transform-origin:0 50%;">Repeat</div><svg class="a" style="left:1547px;top:227px" width="11" height="12" viewBox="0 0 11 12" ><path d="M1.2 1.200L9.800 6L1.200 10.800Z" fill="none" stroke="#8d807c" stroke-width="1.200" stroke-linejoin="round"/></svg><div class="t " style="left:1565px;top:226px;transform:scaleX(0.9918);transform-origin:0 50%;">Direction</div><div class="f" style="left:1708px;top:221px;width:93px"></div><div class="f" style="left:1805px;top:221px;width:92px"></div><div class="t " style="left:1715px;top:226px;">X</div><div class="t " style="left:1813px;top:226px;">Y</div><div class="t tr" style="left:1708px;width:85px;text-align:right;top:226px">459.4</div><div class="t tr" style="left:1805px;width:84px;text-align:right;top:226px">0</div><svg class="a" style="left:1547px;top:259px" width="11" height="12" viewBox="0 0 11 12" ><path d="M1.2 1.200L9.800 6L1.200 10.800Z" fill="none" stroke="#8d807c" stroke-width="1.200" stroke-linejoin="round"/></svg><div class="t " style="left:1565px;top:258px;transform:scaleX(0.9459);transform-origin:0 50%;">Angle</div><div class="f" style="left:1708px;top:253px;width:189px"></div><div class="a" style="left:1709px;top:254px;width:89px;height:22px;background:#222;border-radius:1px"></div><div class="a" style="left:1796.5px;top:254px;width:3px;height:22px;background:#555;border-radius:1px"></div><div class="t tc" style="left:1708px;width:189px;text-align:center;top:258px">-8.6°</div><svg class="a" style="left:1547px;top:291px" width="11" height="12" viewBox="0 0 11 12" ><path d="M1.2 1.200L9.800 6L1.200 10.800Z" fill="none" stroke="#8d807c" stroke-width="1.200" stroke-linejoin="round"/></svg><div class="t " style="left:1565px;top:290px;transform:scaleX(0.9469);transform-origin:0 50%;">Instances</div><div class="f" style="left:1708px;top:285px;width:189px"></div><div class="t tc" style="left:1708px;width:189px;text-align:center;top:290px">5</div><div class="sec" style="top:321.5px"></div><div class="body" style="top:345px;height:72px"></div><svg class="a" style="left:1548px;top:330.5px" width="10" height="6" viewBox="0 0 10 6" ><path d="M1 1L5 5L9 1" fill="none" stroke="#eee" stroke-width="1.6"/></svg><div class="t b" style="left:1565px;top:325.5px;transform:scaleX(0.9623);transform-origin:0 50%;">Fill</div><svg class="a" style="left:1547px;top:359px" width="11" height="12" viewBox="0 0 11 12" ><path d="M1.2 1.200L9.800 6L1.200 10.800Z" fill="none" stroke="#8d807c" stroke-width="1.200" stroke-linejoin="round"/></svg><div class="t " style="left:1565px;top:358px;transform:scaleX(1.0014);transform-origin:0 50%;">Fill</div><div class="a" style="left:1708px;top:353px;width:189px;height:24px;background:#517275;border:2px solid #666;border-radius:2px"></div><div class="a" style="left:1708px;top:385px;width:94px;height:24px;background:#eee;border-radius:2px 0 0 2px"></div><div class="a" style="left:1803px;top:385px;width:94px;height:24px;background:#555;border-radius:0 2px 2px 0"></div><div class="t tc" style="left:1708px;width:94px;text-align:center;top:390px;color:#222">Solid</div><div class="t tc" style="left:1803px;width:94px;text-align:center;top:390px">Gradient</div><div class="sec" style="top:421px"></div><div class="body" style="top:444.5px;height:40px"></div><svg class="a" style="left:1548px;top:430px" width="10" height="6" viewBox="0 0 10 6" ><path d="M1 1L5 5L9 1" fill="none" stroke="#eee" stroke-width="1.6"/></svg><div class="t b" style="left:1565px;top:425px;transform:scaleX(0.9264);transform-origin:0 50%;">Circle</div><svg class="a" style="left:1547px;top:459px" width="11" height="12" viewBox="0 0 11 12" ><path d="M1.2 1.200L9.800 6L1.200 10.800Z" fill="none" stroke="#8d807c" stroke-width="1.200" stroke-linejoin="round"/></svg><div class="t " style="left:1565px;top:458px;transform:scaleX(0.9308);transform-origin:0 50%;">Radius</div><div class="f" style="left:1708px;top:453px;width:189px"></div><div class="t tc" style="left:1708px;width:189px;text-align:center;top:458px">20</div><div class="a" style="left:1911px;top:211px;width:7px;height:263px;background:#555;border-radius:1px"></div><svg class="a" style="left:0px;top:0px" width="1" height="1" viewBox="0 0 1 1" ><path d="M1911.800 64.500H1917.200L1914.500 61.500ZM1911.800 477H1917.200L1914.500 480Z" fill="#555"/></svg><div class="a" style="left:1537px;top:493px;width:383px;height:563px;background:#333;border-radius:6px"></div><div class="a" style="left:1537px;top:493px;width:383px;height:28px;background:#111;border-radius:6px 6px 0 0"></div><div class="a" style="left:1537px;top:493px;width:54px;height:28px;background:#333;border-radius:6px 6px 0 0"></div><div class="a" style="left:1591px;top:515px;width:6px;height:6px;background:radial-gradient(circle at 100% 0,#111 5.500px,#333 6px)"></div><div class="t " style="left:1545px;top:500px;transform:scaleX(0.9335);transform-origin:0 50%;">Layers</div><div class="f" style="left:1541px;top:525px;width:87px"></div><div class="t " style="left:1549px;top:530px;transform:scaleX(0.9883);transform-origin:0 50%;">Normal</div><svg class="a" style="left:1613px;top:534.5px" width="10" height="6" viewBox="0 0 10 6" ><path d="M1 1L5 5L9 1" fill="none" stroke="#eee" stroke-width="1.6"/></svg><div class="f" style="left:1632px;top:525px;width:131px"></div><div class="a" style="left:1633px;top:526px;width:128px;height:22px;background:#222;border-radius:1px"></div><div class="a" style="left:1760px;top:526px;width:3px;height:22px;background:#555;border-radius:1px"></div><div class="t " style="left:1640px;top:530px;transform:scaleX(0.9849);transform-origin:0 50%;">Opacity</div><div class="t tr" style="left:1632px;width:124px;text-align:right;top:530px">100%</div><svg class="a" style="left:0px;top:0px" width="1" height="1" viewBox="0 0 1 1" ><rect x="1786" y="532" width="10.500" height="10.500" fill="none" stroke="#eee" stroke-width="1.200"/><path d="M1791.200 534.500V540M1788.500 537.200H1794" stroke="#eee" stroke-width="1.200"/><path d="M1808.500 532H1814L1815.500 533.500H1823V542.500H1808.500Z" fill="#eee"/><path d="M1834 533.500H1845M1837.500 533V531.500H1841.500V533M1835 535L1835.800 543.500H1843.200L1844 535ZM1838 536.500V542M1839.500 536.500V542M1841 536.500V542" fill="none" stroke="#eee" stroke-width="1.100"/><rect x="1876" y="536.500" width="8" height="6.500" rx="1" fill="none" stroke="#eee" stroke-width="1.300"/><path d="M1877.500 536.500V534Q1877.500 531.200 1880 531.200Q1882.500 531.200 1882.500 534" fill="none" stroke="#eee" stroke-width="1.300"/><rect x="1879.400" y="538.500" width="1.300" height="2.500" fill="#eee"/></svg><svg class="a" style="left:1896px;top:531.7px" width="16" height="11" viewBox="0 0 16 11" ><path d="M0 5.500Q8 -5 16 5.500Q8 16 0 5.500Z" fill="#eee"/><circle cx="8" cy="5.500" r="3.600" fill="#333"/><circle cx="8" cy="5.500" r="1.900" fill="#eee"/></svg><div class="a" style="left:1542px;top:587px;width:362px;height:1px;background:#222"></div><svg class="a" style="left:1561px;top:566px" width="8" height="10" viewBox="0 0 8 10" ><path d="M2 1L6 5L2 9" fill="none" stroke="#999" stroke-width="1.300"/></svg><div class="th" style="top:559px"><svg width="36" height="24" viewBox="0 0 36 24"><rect width="36" height="24" fill="url(#chk)"/><path d="M2.600 6.900L34.300 7.300L33.800 15.900Q32 13 28 13.500Q22 14.500 18 15.900Q12 14.500 6.200 9.700Z" fill="#d93f2e"/></svg></div><div class="t " style="left:1621px;top:564px;transform:scaleX(0.9262);transform-origin:0 50%;">Top Right Red</div><svg class="a" style="left:1885px;top:565.5px" width="16" height="11" viewBox="0 0 16 11" ><path d="M0 5.500Q8 -5 16 5.500Q8 16 0 5.500Z" fill="#eee"/><circle cx="8" cy="5.500" r="3.600" fill="#333"/><circle cx="8" cy="5.500" r="1.900" fill="#eee"/></svg><div class="a" style="left:1542px;top:620px;width:362px;height:1px;background:#222"></div><svg class="a" style="left:1561px;top:599px" width="8" height="10" viewBox="0 0 8 10" ><path d="M2 1L6 5L2 9" fill="none" stroke="#999" stroke-width="1.300"/></svg><div class="th" style="top:592px"><svg width="36" height="24" viewBox="0 0 36 24"><rect width="36" height="24" fill="url(#chk)"/><path d="M2.600 2.800Q12 1.500 24 2.300L31.200 3.100Q34.500 7 32.700 14Q31 17 27.300 18.700Q22 22 17.900 22.100Q14 22 11.700 20.200Q8.500 16 7.800 8.600Q6.500 6 2.600 2.800Z" fill="#517275"/></svg></div><div class="t " style="left:1621px;top:597px;transform:scaleX(0.9500);transform-origin:0 50%;">Top Right Blue</div><svg class="a" style="left:1885px;top:598.5px" width="16" height="11" viewBox="0 0 16 11" ><path d="M0 5.500Q8 -5 16 5.500Q8 16 0 5.500Z" fill="#eee"/><circle cx="8" cy="5.500" r="3.600" fill="#333"/><circle cx="8" cy="5.500" r="1.900" fill="#eee"/></svg><div class="a" style="left:1542px;top:653px;width:362px;height:1px;background:#222"></div><svg class="a" style="left:1561px;top:632px" width="8" height="10" viewBox="0 0 8 10" ><path d="M2 1L6 5L2 9" fill="none" stroke="#999" stroke-width="1.300"/></svg><div class="th" style="top:625px"><svg width="36" height="24" viewBox="0 0 36 24"><rect width="36" height="24" fill="url(#chk)"/><path d="M3.100 8.700L13.200 5.100L22.600 2L32.700 7.500Q27 10 24.100 13.700Q21 17.500 19.800 22.300Q17.500 19.500 14.800 16.800Q11.500 14 3.100 8.700Z" fill="#1b2124"/></svg></div><div class="t " style="left:1621px;top:630px;transform:scaleX(0.9360);transform-origin:0 50%;">Cheek Shadow</div><svg class="a" style="left:1885px;top:631.5px" width="16" height="11" viewBox="0 0 16 11" ><path d="M0 5.500Q8 -5 16 5.500Q8 16 0 5.500Z" fill="#eee"/><circle cx="8" cy="5.500" r="3.600" fill="#333"/><circle cx="8" cy="5.500" r="1.900" fill="#eee"/></svg><div class="a" style="left:1542px;top:686px;width:362px;height:1px;background:#222"></div><svg class="a" style="left:1561px;top:665px" width="8" height="10" viewBox="0 0 8 10" ><path d="M2 1L6 5L2 9" fill="none" stroke="#999" stroke-width="1.300"/></svg><div class="th" style="top:658px"><svg width="36" height="24" viewBox="0 0 36 24"><rect width="36" height="24" fill="url(#chk)"/><path d="M2.600 17.100Q12 13 21 9.300L33.800 4.700Q31.500 8 28.800 10.900Q26 13.500 22.600 15.600Q19.500 17.500 16.400 18.200Q12 19.300 8.600 18.700Q5 18.300 2.600 17.100Z" fill="#1b2124"/></svg></div><div class="t " style="left:1621px;top:663px;transform:scaleX(0.9071);transform-origin:0 50%;">Face Black</div><svg class="a" style="left:1885px;top:664.5px" width="16" height="11" viewBox="0 0 16 11" ><path d="M0 5.500Q8 -5 16 5.500Q8 16 0 5.500Z" fill="#eee"/><circle cx="8" cy="5.500" r="3.600" fill="#333"/><circle cx="8" cy="5.500" r="1.900" fill="#eee"/></svg><div class="a" style="left:1542px;top:719px;width:362px;height:1px;background:#222"></div><svg class="a" style="left:1561px;top:698px" width="8" height="10" viewBox="0 0 8 10" ><path d="M2 1L6 5L2 9" fill="none" stroke="#999" stroke-width="1.300"/></svg><div class="th" style="top:691px"><svg width="36" height="24" viewBox="0 0 36 24"><rect width="36" height="24" fill="url(#chk)"/><path d="M3.900 16.800L13.200 13.700Q19 11.500 24.100 8.300Q28.500 5.500 31.900 2Q32.200 6 31.200 9.800Q29.500 14.500 26.500 17.600Q24 20.500 21 21.800Q17 21.800 13.200 20.700Q8 19 3.900 16.800Z" fill="#517275"/></svg></div><div class="t " style="left:1621px;top:696px;transform:scaleX(0.9017);transform-origin:0 50%;">Face Blue</div><svg class="a" style="left:1885px;top:697.5px" width="16" height="11" viewBox="0 0 16 11" ><path d="M0 5.500Q8 -5 16 5.500Q8 16 0 5.500Z" fill="#eee"/><circle cx="8" cy="5.500" r="3.600" fill="#333"/><circle cx="8" cy="5.500" r="1.900" fill="#eee"/></svg><div class="a" style="left:1542px;top:752px;width:362px;height:1px;background:#222"></div><svg class="a" style="left:1561px;top:731px" width="8" height="10" viewBox="0 0 8 10" ><path d="M2 1L6 5L2 9" fill="none" stroke="#999" stroke-width="1.300"/></svg><div class="th" style="top:724px"><svg width="36" height="24" viewBox="0 0 36 24"><rect width="36" height="24" fill="url(#chk)"/><path d="M12 10.400Q17 8.500 22.600 8.400Q24.500 15 24.900 22.100L16.400 21.300Q14.500 18.500 14 15.900Q12.800 13 12 10.400Z" fill="#517275"/></svg></div><div class="t " style="left:1621px;top:729px;transform:scaleX(0.9652);transform-origin:0 50%;">Bottom Left Blue</div><svg class="a" style="left:1885px;top:730.5px" width="16" height="11" viewBox="0 0 16 11" ><path d="M0 5.500Q8 -5 16 5.500Q8 16 0 5.500Z" fill="#eee"/><circle cx="8" cy="5.500" r="3.600" fill="#333"/><circle cx="8" cy="5.500" r="1.900" fill="#eee"/></svg><div class="a" style="left:1542px;top:785px;width:362px;height:1px;background:#222"></div><svg class="a" style="left:1561px;top:764px" width="8" height="10" viewBox="0 0 8 10" ><path d="M2 1L6 5L2 9" fill="none" stroke="#999" stroke-width="1.300"/></svg><div class="th" style="top:757px"><svg width="36" height="24" viewBox="0 0 36 24"><rect width="36" height="24" fill="url(#chk)"/><path d="M6.200 11.700Q9.500 9 13.200 7Q19 3.500 24.100 2.300Q27.500 3.500 29.600 6.200Q30 10 28.800 13.200Q26.500 16 23.400 17.900Q20 20.500 16.400 21.800Q12 21.500 8.600 19.500Q6.500 17.800 5.500 15.600Q5.500 13.500 6.200 11.700Z" fill="#ec9b2e"/></svg></div><div class="t " style="left:1621px;top:762px;transform:scaleX(0.9525);transform-origin:0 50%;">Bottom Left Orange</div><svg class="a" style="left:1885px;top:763.5px" width="16" height="11" viewBox="0 0 16 11" ><path d="M0 5.500Q8 -5 16 5.500Q8 16 0 5.500Z" fill="#eee"/><circle cx="8" cy="5.500" r="3.600" fill="#333"/><circle cx="8" cy="5.500" r="1.900" fill="#eee"/></svg><div class="a" style="left:1542px;top:818px;width:362px;height:1px;background:#222"></div><svg class="a" style="left:1561px;top:797px" width="8" height="10" viewBox="0 0 8 10" ><path d="M2 1L6 5L2 9" fill="none" stroke="#999" stroke-width="1.300"/></svg><div class="th" style="top:790px"><svg width="36" height="24" viewBox="0 0 36 24"><rect width="36" height="24" fill="url(#chk)"/><path d="M6.700 2.500Q8.500 3.200 10.100 4.400Q13 7.500 16.400 9Q20 10 24.100 9.800Q27.500 10.800 29.100 13.400Q25.500 13.200 22.600 14.500Q19 16.800 16.400 19.900Q14 21.800 11.700 21.800Q9 21.500 7 19.900Q5.800 16 6.200 12.100Q6.200 7 6.700 2.500Z" fill="#d93f2e"/></svg></div><div class="t " style="left:1621px;top:795px;transform:scaleX(0.9467);transform-origin:0 50%;">Bottom Left Red</div><svg class="a" style="left:1885px;top:796.5px" width="16" height="11" viewBox="0 0 16 11" ><path d="M0 5.500Q8 -5 16 5.500Q8 16 0 5.500Z" fill="#eee"/><circle cx="8" cy="5.500" r="3.600" fill="#333"/><circle cx="8" cy="5.500" r="1.900" fill="#eee"/></svg><div class="a" style="left:1542px;top:851px;width:362px;height:1px;background:#222"></div><svg class="a" style="left:1561px;top:830px" width="8" height="10" viewBox="0 0 8 10" ><path d="M2 1L6 5L2 9" fill="none" stroke="#999" stroke-width="1.300"/></svg><div class="th" style="top:823px"><svg width="36" height="24" viewBox="0 0 36 24"><rect width="36" height="24" fill="url(#chk)"/><path d="M4.700 10.100Q8.500 8.500 11.700 6.200Q15 3.500 17.900 2Q21 2.800 24.100 4.700Q26 10.500 28 16.400L30.400 21.800L4.700 21.300Z" fill="#eedcb9"/></svg></div><div class="t " style="left:1621px;top:828px;transform:scaleX(0.9672);transform-origin:0 50%;">Bottom Left White</div><svg class="a" style="left:1885px;top:829.5px" width="16" height="11" viewBox="0 0 16 11" ><path d="M0 5.500Q8 -5 16 5.500Q8 16 0 5.500Z" fill="#eee"/><circle cx="8" cy="5.500" r="3.600" fill="#333"/><circle cx="8" cy="5.500" r="1.900" fill="#eee"/></svg><div class="a" style="left:1542px;top:884px;width:362px;height:1px;background:#222"></div><div class="th" style="top:856px"><svg width="36" height="24" viewBox="0 0 36 24"><rect width="36" height="24" fill="url(#chk)"/><g fill="#ec9b2e"><circle cx="14.4" cy="1.9" r="0.45"/><circle cx="19.0" cy="3.7" r="0.45"/><circle cx="23.8" cy="5.1" r="0.45"/><circle cx="28.7" cy="6.2" r="0.45"/><circle cx="33.6" cy="7.0" r="0.45"/><circle cx="13.4" cy="3.4" r="0.45"/><circle cx="17.9" cy="5.6" r="0.45"/><circle cx="22.5" cy="7.4" r="0.45"/><circle cx="27.3" cy="8.9" r="0.45"/><circle cx="32.2" cy="10.0" r="0.45"/><circle cx="12.1" cy="4.8" r="0.45"/><circle cx="16.4" cy="7.3" r="0.45"/><circle cx="20.9" cy="9.5" r="0.45"/><circle cx="25.6" cy="11.3" r="0.45"/><circle cx="30.4" cy="12.8" r="0.45"/><circle cx="10.6" cy="6.0" r="0.45"/><circle cx="14.7" cy="8.8" r="0.45"/><circle cx="19.0" cy="11.3" r="0.45"/><circle cx="23.5" cy="13.5" r="0.45"/><circle cx="28.2" cy="15.3" r="0.45"/><circle cx="8.8" cy="6.9" r="0.45"/><circle cx="12.7" cy="10.0" r="0.45"/><circle cx="16.8" cy="12.8" r="0.45"/><circle cx="21.1" cy="15.4" r="0.45"/><circle cx="25.7" cy="17.5" r="0.45"/><circle cx="6.8" cy="7.6" r="0.45"/><circle cx="10.5" cy="11.0" r="0.45"/><circle cx="14.4" cy="14.1" r="0.45"/><circle cx="18.5" cy="16.9" r="0.45"/><circle cx="22.8" cy="19.5" r="0.45"/><circle cx="4.7" cy="7.9" r="0.45"/><circle cx="8.0" cy="11.6" r="0.45"/><circle cx="11.7" cy="15.0" r="0.45"/><circle cx="15.6" cy="18.1" r="0.45"/><circle cx="19.7" cy="21.0" r="0.45"/><circle cx="2.4" cy="7.9" r="0.45"/><circle cx="5.4" cy="11.9" r="0.45"/><circle cx="8.8" cy="15.5" r="0.45"/><circle cx="12.5" cy="19.0" r="0.45"/><circle cx="16.4" cy="22.1" r="0.45"/></g></svg></div><div class="t " style="left:1621px;top:861px;transform:scaleX(0.9312);transform-origin:0 50%;">Hair Dots Orange</div><svg class="a" style="left:1885px;top:862.5px" width="16" height="11" viewBox="0 0 16 11" ><path d="M0 5.500Q8 -5 16 5.500Q8 16 0 5.500Z" fill="#eee"/><circle cx="8" cy="5.500" r="3.600" fill="#333"/><circle cx="8" cy="5.500" r="1.900" fill="#eee"/></svg><div class="a" style="left:1542px;top:917px;width:362px;height:1px;background:#222"></div><div class="th" style="top:889px"><svg width="36" height="24" viewBox="0 0 36 24"><rect width="36" height="24" fill="url(#chk)"/><g fill="#d93f2e"><circle cx="14.4" cy="1.9" r="0.65"/><circle cx="19.0" cy="3.7" r="0.65"/><circle cx="23.8" cy="5.1" r="0.65"/><circle cx="28.7" cy="6.2" r="0.65"/><circle cx="33.6" cy="7.0" r="0.65"/><circle cx="13.4" cy="3.4" r="0.65"/><circle cx="17.9" cy="5.6" r="0.65"/><circle cx="22.5" cy="7.4" r="0.65"/><circle cx="27.3" cy="8.9" r="0.65"/><circle cx="32.2" cy="10.0" r="0.65"/><circle cx="12.1" cy="4.8" r="0.65"/><circle cx="16.4" cy="7.3" r="0.65"/><circle cx="20.9" cy="9.5" r="0.65"/><circle cx="25.6" cy="11.3" r="0.65"/><circle cx="30.4" cy="12.8" r="0.65"/><circle cx="10.6" cy="6.0" r="0.65"/><circle cx="14.7" cy="8.8" r="0.65"/><circle cx="19.0" cy="11.3" r="0.65"/><circle cx="23.5" cy="13.5" r="0.65"/><circle cx="28.2" cy="15.3" r="0.65"/><circle cx="8.8" cy="6.9" r="0.65"/><circle cx="12.7" cy="10.0" r="0.65"/><circle cx="16.8" cy="12.8" r="0.65"/><circle cx="21.1" cy="15.4" r="0.65"/><circle cx="25.7" cy="17.5" r="0.65"/><circle cx="6.8" cy="7.6" r="0.65"/><circle cx="10.5" cy="11.0" r="0.65"/><circle cx="14.4" cy="14.1" r="0.65"/><circle cx="18.5" cy="16.9" r="0.65"/><circle cx="22.8" cy="19.5" r="0.65"/><circle cx="4.7" cy="7.9" r="0.65"/><circle cx="8.0" cy="11.6" r="0.65"/><circle cx="11.7" cy="15.0" r="0.65"/><circle cx="15.6" cy="18.1" r="0.65"/><circle cx="19.7" cy="21.0" r="0.65"/><circle cx="2.4" cy="7.9" r="0.65"/><circle cx="5.4" cy="11.9" r="0.65"/><circle cx="8.8" cy="15.5" r="0.65"/><circle cx="12.5" cy="19.0" r="0.65"/><circle cx="16.4" cy="22.1" r="0.65"/></g></svg></div><div class="t " style="left:1621px;top:894px;transform:scaleX(0.9136);transform-origin:0 50%;">Hair Dots Red</div><svg class="a" style="left:1885px;top:895.5px" width="16" height="11" viewBox="0 0 16 11" ><path d="M0 5.500Q8 -5 16 5.500Q8 16 0 5.500Z" fill="#eee"/><circle cx="8" cy="5.500" r="3.600" fill="#333"/><circle cx="8" cy="5.500" r="1.900" fill="#eee"/></svg><div class="a" style="left:1541px;top:918px;width:364px;height:32px;background:#444;border-radius:2px"></div><div class="a" style="left:1542px;top:950px;width:362px;height:1px;background:#222"></div><div class="th" style="top:922px"><svg width="36" height="24" viewBox="0 0 36 24"><rect width="36" height="24" fill="url(#chk)"/><g fill="#517275"><circle cx="14.4" cy="1.9" r="0.9"/><circle cx="19.0" cy="3.7" r="0.9"/><circle cx="23.8" cy="5.1" r="0.9"/><circle cx="28.7" cy="6.2" r="0.9"/><circle cx="33.6" cy="7.0" r="0.9"/><circle cx="13.4" cy="3.4" r="0.9"/><circle cx="17.9" cy="5.6" r="0.9"/><circle cx="22.5" cy="7.4" r="0.9"/><circle cx="27.3" cy="8.9" r="0.9"/><circle cx="32.2" cy="10.0" r="0.9"/><circle cx="12.1" cy="4.8" r="0.9"/><circle cx="16.4" cy="7.3" r="0.9"/><circle cx="20.9" cy="9.5" r="0.9"/><circle cx="25.6" cy="11.3" r="0.9"/><circle cx="30.4" cy="12.8" r="0.9"/><circle cx="10.6" cy="6.0" r="0.9"/><circle cx="14.7" cy="8.8" r="0.9"/><circle cx="19.0" cy="11.3" r="0.9"/><circle cx="23.5" cy="13.5" r="0.9"/><circle cx="28.2" cy="15.3" r="0.9"/><circle cx="8.8" cy="6.9" r="0.9"/><circle cx="12.7" cy="10.0" r="0.9"/><circle cx="16.8" cy="12.8" r="0.9"/><circle cx="21.1" cy="15.4" r="0.9"/><circle cx="25.7" cy="17.5" r="0.9"/><circle cx="6.8" cy="7.6" r="0.9"/><circle cx="10.5" cy="11.0" r="0.9"/><circle cx="14.4" cy="14.1" r="0.9"/><circle cx="18.5" cy="16.9" r="0.9"/><circle cx="22.8" cy="19.5" r="0.9"/><circle cx="4.7" cy="7.9" r="0.9"/><circle cx="8.0" cy="11.6" r="0.9"/><circle cx="11.7" cy="15.0" r="0.9"/><circle cx="15.6" cy="18.1" r="0.9"/><circle cx="19.7" cy="21.0" r="0.9"/><circle cx="2.4" cy="7.9" r="0.9"/><circle cx="5.4" cy="11.9" r="0.9"/><circle cx="8.8" cy="15.5" r="0.9"/><circle cx="12.5" cy="19.0" r="0.9"/><circle cx="16.4" cy="22.1" r="0.9"/></g></svg></div><div class="t " style="left:1621px;top:927px;transform:scaleX(0.9402);transform-origin:0 50%;">Hair Dots Blue</div><svg class="a" style="left:1885px;top:928.5px" width="16" height="11" viewBox="0 0 16 11" ><path d="M0 5.500Q8 -5 16 5.500Q8 16 0 5.500Z" fill="#eee"/><circle cx="8" cy="5.500" r="3.600" fill="#333"/><circle cx="8" cy="5.500" r="1.900" fill="#eee"/></svg><div class="a" style="left:1542px;top:983px;width:362px;height:1px;background:#222"></div><svg class="a" style="left:1561px;top:962px" width="8" height="10" viewBox="0 0 8 10" ><path d="M2 1L6 5L2 9" fill="none" stroke="#999" stroke-width="1.300"/></svg><div class="th" style="top:955px"><svg width="36" height="24" viewBox="0 0 36 24"><rect width="36" height="24" fill="url(#chk)"/><path d="M7 2.500H21.800L14 11.400L21 17.600L29.600 18.400L21 19.900L20.200 21.500H7Z" fill="#1b2124"/></svg></div><div class="t " style="left:1621px;top:960px;transform:scaleX(0.9167);transform-origin:0 50%;">Face Shadow</div><svg class="a" style="left:1885px;top:961.5px" width="16" height="11" viewBox="0 0 16 11" ><path d="M0 5.500Q8 -5 16 5.500Q8 16 0 5.500Z" fill="#eee"/><circle cx="8" cy="5.500" r="3.600" fill="#333"/><circle cx="8" cy="5.500" r="1.900" fill="#eee"/></svg><div class="a" style="left:1542px;top:1016px;width:362px;height:1px;background:#222"></div><svg class="a" style="left:1561px;top:995px" width="8" height="10" viewBox="0 0 8 10" ><path d="M2 1L6 5L2 9" fill="none" stroke="#999" stroke-width="1.300"/></svg><div class="th" style="top:988px"><svg width="36" height="24" viewBox="0 0 36 24"><rect width="36" height="24" fill="url(#chk)"/><path d="M22.600 2.300Q24.500 4.500 24.900 7Q24.800 10 23.400 13.200Q21.500 17.500 19.500 21.300Q17 20 14.800 17.900Q12.500 15.500 11.200 12.500Q12.200 10 14 7.800Q16 5.500 18.700 3.900Q20.500 2.800 22.600 2.300Z" fill="#d93f2e"/></svg></div><div class="t " style="left:1621px;top:993px;transform:scaleX(0.8653);transform-origin:0 50%;">Face Red</div><svg class="a" style="left:1885px;top:994.5px" width="16" height="11" viewBox="0 0 16 11" ><path d="M0 5.500Q8 -5 16 5.500Q8 16 0 5.500Z" fill="#eee"/><circle cx="8" cy="5.500" r="3.600" fill="#333"/><circle cx="8" cy="5.500" r="1.900" fill="#eee"/></svg><svg class="a" style="left:1561px;top:1028px" width="8" height="10" viewBox="0 0 8 10" ><path d="M2 1L6 5L2 9" fill="none" stroke="#999" stroke-width="1.300"/></svg><div class="th" style="top:1021px"><svg width="36" height="24" viewBox="0 0 36 24"><rect width="36" height="24" fill="url(#chk)"/><path d="M9.300 11.400Q11 8 14 5.900Q17 3.800 21 2.800Q24 2.300 26.500 2.800Q25.800 4.300 25.700 5.900Q25.500 8.500 24.900 11.400Q24.500 14 23.400 16Q20 15.500 16.400 16Q14 16.800 12.500 18.400Q11.500 20 10.900 22.300Q9.500 19.500 9 16Q8.800 13.500 9.300 11.400Z" fill="#ec9b2e"/></svg></div><div class="t " style="left:1621px;top:1026px;transform:scaleX(0.9481);transform-origin:0 50%;">Mouth Orange</div><svg class="a" style="left:1885px;top:1027.5px" width="16" height="11" viewBox="0 0 16 11" ><path d="M0 5.500Q8 -5 16 5.500Q8 16 0 5.500Z" fill="#eee"/><circle cx="8" cy="5.500" r="3.600" fill="#333"/><circle cx="8" cy="5.500" r="1.900" fill="#eee"/></svg><div class="a" style="left:1911px;top:764px;width:7px;height:193px;background:#555;border-radius:1px"></div><svg class="a" style="left:0px;top:0px" width="1" height="1" viewBox="0 0 1 1" ><path d="M1911.800 565H1917.200L1914.500 562ZM1911.800 1038.500H1917.200L1914.500 1041.500Z" fill="#555"/></svg><div class="a" style="left:0;top:1056px;width:1920px;height:24px;background:#222"></div><svg class="a" style="left:0px;top:0px" width="1" height="1" viewBox="0 0 1 1" ><rect x="5.6" y="1061" width="9" height="14" rx="4.500" fill="none" stroke="#ccc" stroke-width="1.200"/><path d="M6.5 1061.500H10V1067H5.8V1065Q5.8 1061.500 6.5 1061.500Z" fill="#eee"/><path d="M16 1064Q17.5 1069 15 1075M18.5 1066Q20 1070 17.5 1076" fill="none" stroke="#ccc" stroke-width="1"/></svg><div class="t " style="left:24px;top:1061px;transform:scaleX(0.9285);transform-origin:0 50%;">Drag Selected</div><div class="a" style="left:116px;top:1060px;width:1px;height:16px;background:#555"></div><svg class="a" style="left:0px;top:0px" width="1" height="1" viewBox="0 0 1 1" ><rect x="132.6" y="1061" width="9" height="14" rx="4.500" fill="none" stroke="#ccc" stroke-width="1.200"/><path d="M133.5 1061.500H137V1067H132.8V1065Q132.8 1061.500 133.5 1061.500Z" fill="#eee"/></svg><div class="t " style="left:149px;top:1061px;transform:scaleX(0.9646);transform-origin:0 50%;">Select Object</div><div class="t b" style="left:234px;top:1061px;">+</div><div class="k" style="left:250px;width:47px">Shift</div><div class="t " style="left:302px;top:1061px;transform:scaleX(0.9507);transform-origin:0 50%;">Extend Selection</div><div class="a" style="left:411px;top:1060px;width:1px;height:16px;background:#555"></div><svg class="a" style="left:0px;top:0px" width="1" height="1" viewBox="0 0 1 1" ><rect x="426.6" y="1061" width="9" height="14" rx="4.500" fill="none" stroke="#ccc" stroke-width="1.200"/><path d="M427.5 1061.500H431V1067H426.8V1065Q426.8 1061.500 427.5 1061.500Z" fill="#eee"/><path d="M437 1064Q438.5 1069 436 1075M439.5 1066Q441 1070 438.5 1076" fill="none" stroke="#ccc" stroke-width="1"/></svg><div class="t " style="left:444px;top:1061px;transform:scaleX(0.9204);transform-origin:0 50%;">Select Area</div><div class="t b" style="left:516px;top:1061px;">+</div><div class="k" style="left:532px;width:47px">Shift</div><div class="t " style="left:584px;top:1061px;transform:scaleX(0.9507);transform-origin:0 50%;">Extend Selection</div><div class="a" style="left:694px;top:1060px;width:1px;height:16px;background:#555"></div><div class="k" style="left:707px;width:15px">G</div><div class="k" style="left:725px;width:15px">R</div><div class="k" style="left:743px;width:15px">S</div><div class="t " style="left:763px;top:1061px;transform:scaleX(0.9435);transform-origin:0 50%;">Grab/Rotate/Scale Selected</div><div class="a" style="left:935px;top:1060px;width:1px;height:16px;background:#555"></div><div class="k" style="left:948px;width:16px"></div><div class="k" style="left:968px;width:16px"></div><div class="k" style="left:988px;width:16px"></div><div class="k" style="left:1008px;width:16px"></div><svg class="a" style="left:0px;top:0px" width="1" height="1" viewBox="0 0 1 1" ><g fill="#eee"><path d="M956 1063L960 1067.500H957.200V1073H954.800V1067.500H952Z"/><path d="M981 1068L976.500 1072V1069.200H971V1066.800H976.500V1064Z"/><path d="M996 1073L992 1068.500H994.800V1063H997.200V1068.500H1000Z"/><path d="M1011 1068L1015.500 1064V1066.800H1021V1069.200H1015.500V1072Z"/></g></svg><div class="t " style="left:1028px;top:1061px;transform:scaleX(0.9406);transform-origin:0 50%;">Nudge Selected</div><div class="t b" style="left:1127px;top:1061px;">+</div><div class="k" style="left:1143px;width:47px">Shift</div><div class="t " style="left:1195px;top:1061px;transform:scaleX(0.9123);transform-origin:0 50%;">10x</div><div class="t b" style="left:1223px;top:1061px;">+</div><div class="k" style="left:1238px;width:32px">Alt</div><div class="t " style="left:1274px;top:1061px;transform:scaleX(0.9207);transform-origin:0 50%;">Resize Corner</div><div class="t b" style="left:1362px;top:1061px;">+</div><div class="k" style="left:1377px;width:40px">Ctrl</div><div class="t " style="left:1421px;top:1061px;transform:scaleX(0.9707);transform-origin:0 50%;">Other Corner</div><div class="a" style="left:1510px;top:1060px;width:1px;height:16px;background:#555"></div><div class="k" style="left:1522px;width:31px">Alt</div><svg class="a" style="left:0px;top:0px" width="1" height="1" viewBox="0 0 1 1" ><rect x="1557.6" y="1061" width="9" height="14" rx="4.500" fill="none" stroke="#ccc" stroke-width="1.200"/><path d="M1558.5 1061.500H1562V1067H1557.8V1065Q1557.8 1061.500 1558.5 1061.500Z" fill="#eee"/><path d="M1568 1064Q1569.5 1069 1567 1075M1570.5 1066Q1572 1070 1569.5 1076" fill="none" stroke="#ccc" stroke-width="1"/></svg><div class="t " style="left:1577px;top:1061px;transform:scaleX(0.9498);transform-origin:0 50%;">Move Duplicate</div><div class="k" style="left:1675px;width:38px">Ctrl</div><div class="k" style="left:1716px;width:15px">D</div><div class="t " style="left:1736px;top:1061px;transform:scaleX(0.9881);transform-origin:0 50%;">Duplicate</div></body></html>
